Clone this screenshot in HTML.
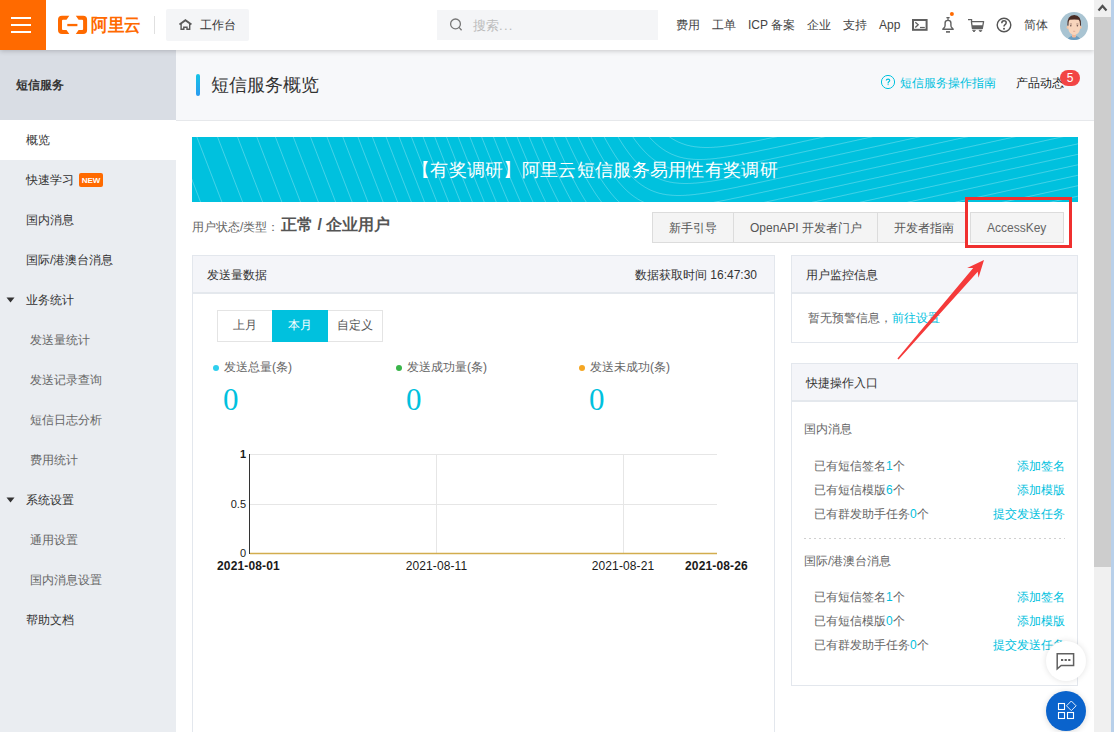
<!DOCTYPE html>
<html><head><meta charset="utf-8">
<style>
*{box-sizing:border-box;margin:0;padding:0}
html,body{width:1114px;height:732px;overflow:hidden;background:#fff;font-family:"Liberation Sans",sans-serif;color:#333;font-size:12px}
.a{position:absolute;white-space:nowrap;line-height:16px}
#top{position:absolute;left:0;top:0;width:1094px;height:50px;background:#fff;box-shadow:0 1px 5px rgba(0,0,0,.2);z-index:5}
#burger{position:absolute;left:0;top:0;width:46px;height:50px;background:#ff6a00}
#burger i{position:absolute;left:11px;width:20px;height:2px;background:#fff}
#side{position:absolute;left:0;top:50px;width:176px;height:682px;background:#eaedf1}
#sidehd{position:absolute;left:0;top:0;width:176px;height:70px;background:#d9dde4}
#main{position:absolute;left:176px;top:50px;width:918px;height:682px;background:#fff}
#mainhd{position:absolute;left:0;top:0;width:918px;height:71px;background:#f7f8fa;border-bottom:1px solid #e6e8eb}
.nav{position:absolute;top:17px;font-size:12px;color:#444;line-height:16px;white-space:nowrap}
.si{position:absolute;left:26px;font-size:12px;color:#333;line-height:16px;white-space:nowrap}
.ss{position:absolute;left:30px;font-size:12px;color:#666;line-height:16px;white-space:nowrap}
.panel{position:absolute;border:1px solid #e3e7ed;background:#fff}
.phd{position:absolute;left:0;top:0;right:0;height:38px;background:#f4f5f9;border-bottom:2px solid #e4e8ed}
#scroll{position:absolute;left:1094px;top:0;width:20px;height:732px;background:#f0f0f0;z-index:10}
</style></head><body>
<div id="top">
  <div id="burger"><i style="top:17px"></i><i style="top:24px"></i><i style="top:31px"></i></div>
  <!-- logo -->
  <svg class="a" style="left:54px;top:10px" width="40" height="30" viewBox="0 0 40 30">
    <path d="M15.3 5.8L8 5.8Q4 5.8 4 9.8L4 20Q4 24 8 24L15.3 24L12.5 20L9 20Q8 20 8 19L8 10.8Q8 9.8 9 9.8L12.5 9.8Z" fill="#ff6a00"/>
    <path d="M21.8 5.8L29.1 5.8Q33.1 5.8 33.1 9.8L33.1 20Q33.1 24 29.1 24L21.8 24L24.6 20L28.1 20Q29.1 20 29.1 19L29.1 10.8Q29.1 9.8 28.1 9.8L24.6 9.8Z" fill="#ff6a00"/>
    <rect x="13.3" y="13.9" width="10.1" height="2.3" fill="#ff6a00"/>
  </svg>
  <div class="a" style="left:91px;top:14px;font-size:18px;line-height:22px;color:#ff6a00;font-weight:bold;transform-origin:0 0;transform:scaleX(0.92)">阿里云</div>
  <div class="a" style="left:154px;top:16px;width:1px;height:18px;background:#e0e0e0"></div>
  <div class="a" style="left:166px;top:9px;width:83px;height:32px;background:#f4f5f7;border-radius:2px"></div>
  <svg class="a" style="left:179px;top:19px" width="14" height="12" viewBox="0 0 14 12">
    <path d="M0.5 5.6L6.4 1.2L12.4 5.6" fill="none" stroke="#5a5a5a" stroke-width="1.9" stroke-linejoin="miter"/>
    <path d="M2.1 5V10.3H4.8V8.3H8V10.3H10.7V5" fill="none" stroke="#5a5a5a" stroke-width="1.4"/>
  </svg>
  <div class="nav" style="left:200px;top:17px;color:#333">工作台</div>
  <div class="a" style="left:437px;top:10px;width:221px;height:30px;background:#f4f5f7"></div>
  <svg class="a" style="left:449px;top:17px" width="15" height="15" viewBox="0 0 15 15">
    <circle cx="6.5" cy="6.9" r="4.9" fill="none" stroke="#777" stroke-width="1.3"/><path d="M10 10.4L12.6 13.2" stroke="#777" stroke-width="1.3"/>
  </svg>
  <div class="nav" style="left:473px;top:18px;color:#bbb;font-size:13px">搜索<span style="letter-spacing:1.3px">...</span></div>
  <div class="nav" style="left:676px">费用</div>
  <div class="nav" style="left:712px">工单</div>
  <div class="nav" style="left:748px">ICP 备案</div>
  <div class="nav" style="left:807px">企业</div>
  <div class="nav" style="left:843px">支持</div>
  <div class="nav" style="left:879px">App</div>
  <svg class="a" style="left:912px;top:19px" width="16" height="12" viewBox="0 0 16 12">
    <rect x="1" y="1" width="13.6" height="9.8" fill="none" stroke="#606060" stroke-width="2"/>
    <path d="M3.3 3.2L6.2 5.8L3.3 8.5" fill="none" stroke="#606060" stroke-width="1.3"/><path d="M8 8.5H12.8" stroke="#606060" stroke-width="1.2"/>
  </svg>
  <svg class="a" style="left:941px;top:12px" width="16" height="22" viewBox="0 0 16 22">
    <circle cx="10.9" cy="2" r="2" fill="#ff6a00"/>
    <rect x="5.4" y="5" width="3.2" height="1.3" fill="#606060"/><rect x="6.4" y="5.5" width="1.2" height="3" fill="#606060"/>
    <path d="M1.8 17.2L3.6 15.1Q4.1 14.3 4.1 13V11Q4.1 8.4 7 8.4Q9.9 8.4 9.9 11V13Q9.9 14.3 10.4 15.1L12.2 17.2Z" fill="none" stroke="#606060" stroke-width="1.4" stroke-linejoin="round"/>
    <path d="M5 19.9H9" stroke="#606060" stroke-width="1.6"/>
  </svg>
  <svg class="a" style="left:968px;top:19px" width="17" height="14" viewBox="0 0 17 14">
    <path d="M0 0.6H3.6V2.6" fill="none" stroke="#606060" stroke-width="1.2"/>
    <path d="M3.4 2.6H15.6L14.3 9.5H4.4Z" fill="none" stroke="#606060" stroke-width="1.3" stroke-linejoin="round"/>
    <path d="M4 6.2H14.9L14.3 9.6H4.4Z" fill="#606060"/>
    <path d="M4.6 11.4H7.4L6 13Z M11.1 11.4H13.9L12.5 13Z" fill="#606060" stroke="#606060" stroke-width="0.8" stroke-linejoin="round"/>
  </svg>
  <svg class="a" style="left:996px;top:17px" width="16" height="16" viewBox="0 0 16 16">
    <circle cx="8" cy="8" r="6.8" fill="none" stroke="#555" stroke-width="1.4"/>
    <path d="M5.8 6.2Q5.8 3.8 8 3.8Q10.2 3.8 10.2 5.8Q10.2 7 8.8 7.8Q8 8.3 8 9.6" fill="none" stroke="#555" stroke-width="1.5"/>
    <circle cx="8" cy="11.8" r="1" fill="#555"/>
  </svg>
  <div class="nav" style="left:1024px">简体</div>
  <svg class="a" style="left:1060px;top:12px" width="28" height="28" viewBox="0 0 28 28">
    <defs><clipPath id="cav"><circle cx="14" cy="14" r="14"/></clipPath></defs>
    <circle cx="14" cy="14" r="14" fill="#a9c4d2"/>
    <g clip-path="url(#cav)">
      <path d="M7.5 28Q8.5 24 14 23.5Q19.5 24 20.5 28Z" fill="#6b9dc0"/>
      <path d="M12 21H16V25Q14 26 12 25Z" fill="#f0b89a"/>
      <ellipse cx="7.9" cy="15.2" rx="1.3" ry="1.7" fill="#f3c4a4"/>
      <ellipse cx="20.3" cy="15.2" rx="1.3" ry="1.7" fill="#f3c4a4"/>
      <path d="M8.4 9Q8.4 6 14.2 6Q20 6 20 9V16Q20 20 17 22Q15.5 23 14.2 23Q12.9 23 11.4 22Q8.4 20 8.4 16Z" fill="#f8d5bc"/>
      <path d="M7.4 13.5Q6.8 3 14.2 3Q21.6 3 21 13.5L20 13.8Q20 8.5 18.5 7.8Q14.2 7.2 9.8 7.8Q8.4 8.5 8.4 13.8Z" fill="#4a2c24"/>
      <circle cx="10.8" cy="13.8" r="0.8" fill="#6a5048"/><circle cx="17.4" cy="13.8" r="0.8" fill="#6a5048"/>
      <path d="M9.8 12H12M16.3 12H18.5" stroke="#7a5a50" stroke-width="0.6"/>
      <path d="M13.2 19.3H15.2" stroke="#d99a88" stroke-width="0.7"/>
    </g>
  </svg>
</div>
<div id="side">
  <div id="sidehd"></div>
  <div class="a" style="left:16px;top:27px;font-size:12px;font-weight:bold;color:#333">短信服务</div>
  <div class="a" style="left:0;top:70px;width:176px;height:40px;background:#fff"></div>
  <div class="si" style="top:82px">概览</div>
  <div class="si" style="top:122px">快速学习</div>
  <div class="a" style="left:79px;top:123px;width:24px;height:14px;background:#ff6a00;border-radius:2px;color:#fff;font-size:8px;line-height:15px;text-align:center;font-weight:bold">NEW</div>
  <div class="si" style="top:162px">国内消息</div>
  <div class="si" style="top:202px">国际/港澳台消息</div>
  <svg class="a" style="left:6px;top:247px" width="9" height="6" viewBox="0 0 9 6"><path d="M0.5 0.5H8.5L4.5 5.5Z" fill="#333"/></svg>
  <div class="si" style="top:242px">业务统计</div>
  <div class="ss" style="top:282px">发送量统计</div>
  <div class="ss" style="top:322px">发送记录查询</div>
  <div class="ss" style="top:362px">短信日志分析</div>
  <div class="ss" style="top:402px">费用统计</div>
  <svg class="a" style="left:6px;top:447px" width="9" height="6" viewBox="0 0 9 6"><path d="M0.5 0.5H8.5L4.5 5.5Z" fill="#333"/></svg>
  <div class="si" style="top:442px">系统设置</div>
  <div class="ss" style="top:482px">通用设置</div>
  <div class="ss" style="top:522px">国内消息设置</div>
  <div class="si" style="top:562px">帮助文档</div>
</div>
<div id="main">
  <div id="mainhd"></div>
  <div class="a" style="left:20px;top:24px;width:4px;height:22px;border-radius:2px;background:linear-gradient(#14c4e6,#2a9af0)"></div>
  <div class="a" style="left:35px;top:24px;font-size:18px;line-height:22px;color:#333">短信服务概览</div>
  <svg class="a" style="left:705px;top:25px" width="14" height="14" viewBox="0 0 14 14">
    <circle cx="7" cy="7" r="6.6" fill="none" stroke="#00c1de" stroke-width="1"/>
    <path d="M5.3 5.5Q5.3 4.2 7.1 4.2Q8.7 4.2 8.7 5.5Q8.7 6.3 7.8 6.8Q7.1 7.3 7.1 8.4" fill="none" stroke="#00c1de" stroke-width="1.2"/>
    <circle cx="7.1" cy="9.6" r="0.6" fill="#00c1de"/>
  </svg>
  <div class="a" style="left:724px;top:25px;font-size:12px;color:#00c1de">短信服务操作指南</div>
  <div class="a" style="left:840px;top:25px;font-size:12px;color:#222">产品动态</div>
  <div class="a" style="left:884px;top:20px;width:20px;height:16px;border-radius:8px;background:#f24545;color:#fff;font-size:12px;line-height:16px;text-align:center">5</div>
</div>

<!-- banner -->
<div class="a" style="left:192px;top:137px;width:886px;height:65px;background:#00c1de;overflow:hidden">
  <svg id="waves" width="886" height="65" viewBox="0 0 886 65" style="position:absolute;left:0;top:0"><path d="M488.0 -9.8 L489.0 -9.3 L490.0 -8.7 L491.0 -8.2 L492.0 -7.7 L493.0 -7.2 L494.0 -6.7 L495.0 -6.3 L496.0 -5.9 L497.0 -5.5 L498.0 -5.1 L499.0 -4.8 L500.0 -4.5 L501.0 -4.2 L502.0 -3.9 L503.0 -3.6 L504.0 -3.4 L505.0 -3.1 L506.0 -2.9 L507.0 -2.7 L508.0 -2.6 L509.0 -2.4 L510.0 -2.3 L511.0 -2.1 L512.0 -2.0 L513.0 -1.9 L514.0 -1.8 L515.0 -1.7 L516.0 -1.7 L517.0 -1.6 L518.0 -1.6 L519.0 -1.6 L520.0 -1.5 L521.0 -1.5 L522.0 -1.5 L523.0 -1.5 L524.0 -1.6 L525.0 -1.6 L526.0 -1.6 L527.0 -1.7 L528.0 -1.7 L529.0 -1.8 L530.0 -1.8 L531.0 -1.9 L532.0 -2.0 L533.0 -2.1 L534.0 -2.2 L535.0 -2.3 L536.0 -2.4 L537.0 -2.5 L538.0 -2.6 L539.0 -2.7 L540.0 -2.8 L541.0 -2.9 L542.0 -3.1 L543.0 -3.2 L544.0 -3.3 L545.0 -3.5 L546.0 -3.6 L547.0 -3.8 L548.0 -3.9 L549.0 -4.1 L550.0 -4.2 L551.0 -4.4 L552.0 -4.6 L553.0 -4.7 L554.0 -4.9 L555.0 -5.1 L556.0 -5.2 L557.0 -5.4 L558.0 -5.6 L559.0 -5.8 L560.0 -5.9 L561.0 -6.1 L562.0 -6.3 L563.0 -6.5 L564.0 -6.7 L565.0 -6.9 L566.0 -7.1 L567.0 -7.3 L568.0 -7.4 L569.0 -7.6 L570.0 -7.8 L571.0 -8.0 L572.0 -8.2 L573.0 -8.4 L574.0 -8.6 L575.0 -8.8 L576.0 -9.0 L577.0 -9.2 L578.0 -9.4 L579.0 -9.6 L580.0 -9.8 L580.5 -9.9 M466.5 -9.6 L467.5 -8.6 L468.5 -7.6 L469.5 -6.6 L470.5 -5.7 L471.5 -4.8 L472.5 -4.0 L473.5 -3.1 L474.5 -2.3 L475.5 -1.6 L476.5 -0.8 L477.5 -0.1 L478.5 0.6 L479.5 1.2 L480.5 1.9 L481.5 2.5 L482.5 3.0 L483.5 3.6 L484.5 4.1 L485.5 4.6 L486.5 5.1 L487.5 5.5 L488.5 5.9 L489.5 6.3 L490.5 6.7 L491.5 7.0 L492.5 7.4 L493.5 7.7 L494.5 8.0 L495.5 8.3 L496.5 8.5 L497.5 8.7 L498.5 9.0 L499.5 9.2 L500.5 9.3 L501.5 9.5 L502.5 9.7 L503.5 9.8 L504.5 9.9 L505.5 10.0 L506.5 10.1 L507.5 10.2 L508.5 10.3 L509.5 10.3 L510.5 10.4 L511.5 10.4 L512.5 10.5 L513.5 10.5 L514.5 10.5 L515.5 10.5 L516.5 10.5 L517.5 10.4 L518.5 10.4 L519.5 10.4 L520.5 10.3 L521.5 10.3 L522.5 10.2 L523.5 10.1 L524.5 10.1 L525.5 10.0 L526.5 9.9 L527.5 9.8 L528.5 9.7 L529.5 9.6 L530.5 9.5 L531.5 9.4 L532.5 9.2 L533.5 9.1 L534.5 9.0 L535.5 8.9 L536.5 8.7 L537.5 8.6 L538.5 8.4 L539.5 8.3 L540.5 8.2 L541.5 8.0 L542.5 7.8 L543.5 7.7 L544.5 7.5 L545.5 7.4 L546.5 7.2 L547.5 7.0 L548.5 6.9 L549.5 6.7 L550.5 6.5 L551.5 6.3 L552.5 6.1 L553.5 6.0 L554.5 5.8 L555.5 5.6 L556.5 5.4 L557.5 5.2 L558.5 5.0 L559.5 4.8 L560.5 4.6 L561.5 4.5 L562.5 4.3 L563.5 4.1 L564.5 3.9 L565.5 3.7 L566.5 3.5 L567.5 3.3 L568.5 3.1 L569.5 2.9 L570.5 2.7 L571.5 2.5 L572.5 2.3 L573.5 2.1 L574.5 1.8 L575.5 1.6 L576.5 1.4 L577.5 1.2 L578.5 1.0 L579.5 0.8 L580.5 0.6 L581.5 0.4 L582.5 0.2 L583.5 -0.0 L584.5 -0.2 L585.5 -0.5 L586.5 -0.7 L587.5 -0.9 L588.5 -1.1 L589.5 -1.3 L590.5 -1.5 L591.5 -1.7 L592.5 -1.9 L593.5 -2.2 L594.5 -2.4 L595.5 -2.6 L596.5 -2.8 L597.5 -3.0 L598.5 -3.2 L599.5 -3.4 L600.5 -3.7 L601.5 -3.9 L602.5 -4.1 L603.5 -4.3 L604.5 -4.5 L605.5 -4.7 L606.5 -5.0 L607.5 -5.2 L608.5 -5.4 L609.5 -5.6 L610.5 -5.8 L611.5 -6.0 L612.5 -6.3 L613.5 -6.5 L614.5 -6.7 L615.5 -6.9 L616.5 -7.1 L617.5 -7.4 L618.5 -7.6 L619.5 -7.8 L620.5 -8.0 L621.5 -8.2 L622.5 -8.4 L623.5 -8.7 L624.5 -8.9 L625.5 -9.1 L626.5 -9.3 L627.5 -9.5 L628.5 -9.8 L629.5 -10.0 L629.5 -10.0 M449.5 -9.7 L450.5 -8.3 L451.5 -7.0 L452.5 -5.7 L453.5 -4.5 L454.5 -3.2 L455.5 -2.0 L456.5 -0.9 L457.5 0.2 L458.5 1.3 L459.5 2.4 L460.5 3.4 L461.5 4.4 L462.5 5.4 L463.5 6.3 L464.5 7.2 L465.5 8.0 L466.5 8.9 L467.5 9.7 L468.5 10.4 L469.5 11.2 L470.5 11.9 L471.5 12.6 L472.5 13.2 L473.5 13.9 L474.5 14.5 L475.5 15.0 L476.5 15.6 L477.5 16.1 L478.5 16.6 L479.5 17.1 L480.5 17.5 L481.5 17.9 L482.5 18.3 L483.5 18.7 L484.5 19.0 L485.5 19.4 L486.5 19.7 L487.5 20.0 L488.5 20.3 L489.5 20.5 L490.5 20.7 L491.5 21.0 L492.5 21.2 L493.5 21.3 L494.5 21.5 L495.5 21.7 L496.5 21.8 L497.5 21.9 L498.5 22.0 L499.5 22.1 L500.5 22.2 L501.5 22.3 L502.5 22.3 L503.5 22.4 L504.5 22.4 L505.5 22.5 L506.5 22.5 L507.5 22.5 L508.5 22.5 L509.5 22.5 L510.5 22.4 L511.5 22.4 L512.5 22.4 L513.5 22.3 L514.5 22.3 L515.5 22.2 L516.5 22.1 L517.5 22.1 L518.5 22.0 L519.5 21.9 L520.5 21.8 L521.5 21.7 L522.5 21.6 L523.5 21.5 L524.5 21.4 L525.5 21.2 L526.5 21.1 L527.5 21.0 L528.5 20.9 L529.5 20.7 L530.5 20.6 L531.5 20.4 L532.5 20.3 L533.5 20.2 L534.5 20.0 L535.5 19.8 L536.5 19.7 L537.5 19.5 L538.5 19.4 L539.5 19.2 L540.5 19.0 L541.5 18.9 L542.5 18.7 L543.5 18.5 L544.5 18.3 L545.5 18.1 L546.5 18.0 L547.5 17.8 L548.5 17.6 L549.5 17.4 L550.5 17.2 L551.5 17.0 L552.5 16.8 L553.5 16.6 L554.5 16.5 L555.5 16.3 L556.5 16.1 L557.5 15.9 L558.5 15.7 L559.5 15.5 L560.5 15.3 L561.5 15.1 L562.5 14.9 L563.5 14.7 L564.5 14.5 L565.5 14.3 L566.5 14.1 L567.5 13.8 L568.5 13.6 L569.5 13.4 L570.5 13.2 L571.5 13.0 L572.5 12.8 L573.5 12.6 L574.5 12.4 L575.5 12.2 L576.5 12.0 L577.5 11.8 L578.5 11.5 L579.5 11.3 L580.5 11.1 L581.5 10.9 L582.5 10.7 L583.5 10.5 L584.5 10.3 L585.5 10.1 L586.5 9.8 L587.5 9.6 L588.5 9.4 L589.5 9.2 L590.5 9.0 L591.5 8.8 L592.5 8.6 L593.5 8.3 L594.5 8.1 L595.5 7.9 L596.5 7.7 L597.5 7.5 L598.5 7.3 L599.5 7.0 L600.5 6.8 L601.5 6.6 L602.5 6.4 L603.5 6.2 L604.5 6.0 L605.5 5.7 L606.5 5.5 L607.5 5.3 L608.5 5.1 L609.5 4.9 L610.5 4.6 L611.5 4.4 L612.5 4.2 L613.5 4.0 L614.5 3.8 L615.5 3.6 L616.5 3.3 L617.5 3.1 L618.5 2.9 L619.5 2.7 L620.5 2.5 L621.5 2.2 L622.5 2.0 L623.5 1.8 L624.5 1.6 L625.5 1.4 L626.5 1.2 L627.5 0.9 L628.5 0.7 L629.5 0.5 L630.5 0.3 L631.5 0.1 L632.5 -0.2 L633.5 -0.4 L634.5 -0.6 L635.5 -0.8 L636.5 -1.0 L637.5 -1.3 L638.5 -1.5 L639.5 -1.7 L640.5 -1.9 L641.5 -2.1 L642.5 -2.4 L643.5 -2.6 L644.5 -2.8 L645.5 -3.0 L646.5 -3.2 L647.5 -3.5 L648.5 -3.7 L649.5 -3.9 L650.5 -4.1 L651.5 -4.3 L652.5 -4.6 L653.5 -4.8 L654.5 -5.0 L655.5 -5.2 L656.5 -5.4 L657.5 -5.7 L658.5 -5.9 L659.5 -6.1 L660.5 -6.3 L661.5 -6.5 L662.5 -6.8 L663.5 -7.0 L664.5 -7.2 L665.5 -7.4 L666.5 -7.6 L667.5 -7.9 L668.5 -8.1 L669.5 -8.3 L670.5 -8.5 L671.5 -8.7 L672.5 -9.0 L673.5 -9.2 L674.5 -9.4 L675.5 -9.6 L676.5 -9.8 L677.0 -9.9 M434.5 -9.7 L435.5 -8.1 L436.5 -6.5 L437.5 -4.9 L438.5 -3.4 L439.5 -1.9 L440.5 -0.5 L441.5 0.9 L442.5 2.3 L443.5 3.7 L444.5 5.0 L445.5 6.3 L446.5 7.5 L447.5 8.8 L448.5 10.0 L449.5 11.1 L450.5 12.2 L451.5 13.3 L452.5 14.4 L453.5 15.4 L454.5 16.4 L455.5 17.4 L456.5 18.3 L457.5 19.2 L458.5 20.0 L459.5 20.9 L460.5 21.7 L461.5 22.4 L462.5 23.2 L463.5 23.9 L464.5 24.6 L465.5 25.2 L466.5 25.9 L467.5 26.5 L468.5 27.0 L469.5 27.6 L470.5 28.1 L471.5 28.6 L472.5 29.1 L473.5 29.5 L474.5 29.9 L475.5 30.3 L476.5 30.7 L477.5 31.0 L478.5 31.4 L479.5 31.7 L480.5 32.0 L481.5 32.3 L482.5 32.5 L483.5 32.7 L484.5 33.0 L485.5 33.2 L486.5 33.3 L487.5 33.5 L488.5 33.7 L489.5 33.8 L490.5 33.9 L491.5 34.0 L492.5 34.1 L493.5 34.2 L494.5 34.3 L495.5 34.3 L496.5 34.4 L497.5 34.4 L498.5 34.5 L499.5 34.5 L500.5 34.5 L501.5 34.5 L502.5 34.5 L503.5 34.4 L504.5 34.4 L505.5 34.4 L506.5 34.3 L507.5 34.3 L508.5 34.2 L509.5 34.1 L510.5 34.1 L511.5 34.0 L512.5 33.9 L513.5 33.8 L514.5 33.7 L515.5 33.6 L516.5 33.5 L517.5 33.4 L518.5 33.2 L519.5 33.1 L520.5 33.0 L521.5 32.9 L522.5 32.7 L523.5 32.6 L524.5 32.4 L525.5 32.3 L526.5 32.2 L527.5 32.0 L528.5 31.8 L529.5 31.7 L530.5 31.5 L531.5 31.4 L532.5 31.2 L533.5 31.0 L534.5 30.9 L535.5 30.7 L536.5 30.5 L537.5 30.3 L538.5 30.1 L539.5 30.0 L540.5 29.8 L541.5 29.6 L542.5 29.4 L543.5 29.2 L544.5 29.0 L545.5 28.8 L546.5 28.6 L547.5 28.5 L548.5 28.3 L549.5 28.1 L550.5 27.9 L551.5 27.7 L552.5 27.5 L553.5 27.3 L554.5 27.1 L555.5 26.9 L556.5 26.7 L557.5 26.5 L558.5 26.3 L559.5 26.1 L560.5 25.8 L561.5 25.6 L562.5 25.4 L563.5 25.2 L564.5 25.0 L565.5 24.8 L566.5 24.6 L567.5 24.4 L568.5 24.2 L569.5 24.0 L570.5 23.8 L571.5 23.5 L572.5 23.3 L573.5 23.1 L574.5 22.9 L575.5 22.7 L576.5 22.5 L577.5 22.3 L578.5 22.1 L579.5 21.8 L580.5 21.6 L581.5 21.4 L582.5 21.2 L583.5 21.0 L584.5 20.8 L585.5 20.6 L586.5 20.3 L587.5 20.1 L588.5 19.9 L589.5 19.7 L590.5 19.5 L591.5 19.3 L592.5 19.0 L593.5 18.8 L594.5 18.6 L595.5 18.4 L596.5 18.2 L597.5 18.0 L598.5 17.7 L599.5 17.5 L600.5 17.3 L601.5 17.1 L602.5 16.9 L603.5 16.6 L604.5 16.4 L605.5 16.2 L606.5 16.0 L607.5 15.8 L608.5 15.6 L609.5 15.3 L610.5 15.1 L611.5 14.9 L612.5 14.7 L613.5 14.5 L614.5 14.2 L615.5 14.0 L616.5 13.8 L617.5 13.6 L618.5 13.4 L619.5 13.2 L620.5 12.9 L621.5 12.7 L622.5 12.5 L623.5 12.3 L624.5 12.1 L625.5 11.8 L626.5 11.6 L627.5 11.4 L628.5 11.2 L629.5 11.0 L630.5 10.7 L631.5 10.5 L632.5 10.3 L633.5 10.1 L634.5 9.9 L635.5 9.6 L636.5 9.4 L637.5 9.2 L638.5 9.0 L639.5 8.8 L640.5 8.5 L641.5 8.3 L642.5 8.1 L643.5 7.9 L644.5 7.7 L645.5 7.4 L646.5 7.2 L647.5 7.0 L648.5 6.8 L649.5 6.6 L650.5 6.3 L651.5 6.1 L652.5 5.9 L653.5 5.7 L654.5 5.5 L655.5 5.2 L656.5 5.0 L657.5 4.8 L658.5 4.6 L659.5 4.4 L660.5 4.1 L661.5 3.9 L662.5 3.7 L663.5 3.5 L664.5 3.3 L665.5 3.0 L666.5 2.8 L667.5 2.6 L668.5 2.4 L669.5 2.2 L670.5 1.9 L671.5 1.7 L672.5 1.5 L673.5 1.3 L674.5 1.1 L675.5 0.8 L676.5 0.6 L677.5 0.4 L678.5 0.2 L679.5 -0.0 L680.5 -0.3 L681.5 -0.5 L682.5 -0.7 L683.5 -0.9 L684.5 -1.1 L685.5 -1.4 L686.5 -1.6 L687.5 -1.8 L688.5 -2.0 L689.5 -2.2 L690.5 -2.5 L691.5 -2.7 L692.5 -2.9 L693.5 -3.1 L694.5 -3.3 L695.5 -3.6 L696.5 -3.8 L697.5 -4.0 L698.5 -4.2 L699.5 -4.4 L700.5 -4.7 L701.5 -4.9 L702.5 -5.1 L703.5 -5.3 L704.5 -5.5 L705.5 -5.8 L706.5 -6.0 L707.5 -6.2 L708.5 -6.4 L709.5 -6.6 L710.5 -6.9 L711.5 -7.1 L712.5 -7.3 L713.5 -7.5 L714.5 -7.7 L715.5 -8.0 L716.5 -8.2 L717.5 -8.4 L718.5 -8.6 L719.5 -8.8 L720.5 -9.1 L721.5 -9.3 L722.5 -9.5 L723.5 -9.7 L724.5 -9.9 L724.5 -9.9 M420.5 -9.7 L421.5 -7.9 L422.5 -6.1 L423.5 -4.4 L424.5 -2.7 L425.5 -1.0 L426.5 0.7 L427.5 2.3 L428.5 3.9 L429.5 5.5 L430.5 7.1 L431.5 8.6 L432.5 10.1 L433.5 11.5 L434.5 12.9 L435.5 14.3 L436.5 15.7 L437.5 17.0 L438.5 18.3 L439.5 19.5 L440.5 20.8 L441.5 22.0 L442.5 23.1 L443.5 24.2 L444.5 25.3 L445.5 26.4 L446.5 27.4 L447.5 28.4 L448.5 29.4 L449.5 30.3 L450.5 31.2 L451.5 32.0 L452.5 32.9 L453.5 33.7 L454.5 34.4 L455.5 35.2 L456.5 35.9 L457.5 36.6 L458.5 37.2 L459.5 37.9 L460.5 38.5 L461.5 39.0 L462.5 39.6 L463.5 40.1 L464.5 40.6 L465.5 41.1 L466.5 41.5 L467.5 41.9 L468.5 42.3 L469.5 42.7 L470.5 43.0 L471.5 43.4 L472.5 43.7 L473.5 44.0 L474.5 44.3 L475.5 44.5 L476.5 44.7 L477.5 45.0 L478.5 45.2 L479.5 45.3 L480.5 45.5 L481.5 45.7 L482.5 45.8 L483.5 45.9 L484.5 46.0 L485.5 46.1 L486.5 46.2 L487.5 46.3 L488.5 46.3 L489.5 46.4 L490.5 46.4 L491.5 46.5 L492.5 46.5 L493.5 46.5 L494.5 46.5 L495.5 46.5 L496.5 46.4 L497.5 46.4 L498.5 46.4 L499.5 46.3 L500.5 46.3 L501.5 46.2 L502.5 46.1 L503.5 46.1 L504.5 46.0 L505.5 45.9 L506.5 45.8 L507.5 45.7 L508.5 45.6 L509.5 45.5 L510.5 45.4 L511.5 45.2 L512.5 45.1 L513.5 45.0 L514.5 44.9 L515.5 44.7 L516.5 44.6 L517.5 44.4 L518.5 44.3 L519.5 44.2 L520.5 44.0 L521.5 43.8 L522.5 43.7 L523.5 43.5 L524.5 43.4 L525.5 43.2 L526.5 43.0 L527.5 42.9 L528.5 42.7 L529.5 42.5 L530.5 42.3 L531.5 42.1 L532.5 42.0 L533.5 41.8 L534.5 41.6 L535.5 41.4 L536.5 41.2 L537.5 41.0 L538.5 40.8 L539.5 40.6 L540.5 40.5 L541.5 40.3 L542.5 40.1 L543.5 39.9 L544.5 39.7 L545.5 39.5 L546.5 39.3 L547.5 39.1 L548.5 38.9 L549.5 38.7 L550.5 38.5 L551.5 38.3 L552.5 38.1 L553.5 37.8 L554.5 37.6 L555.5 37.4 L556.5 37.2 L557.5 37.0 L558.5 36.8 L559.5 36.6 L560.5 36.4 L561.5 36.2 L562.5 36.0 L563.5 35.8 L564.5 35.5 L565.5 35.3 L566.5 35.1 L567.5 34.9 L568.5 34.7 L569.5 34.5 L570.5 34.3 L571.5 34.1 L572.5 33.8 L573.5 33.6 L574.5 33.4 L575.5 33.2 L576.5 33.0 L577.5 32.8 L578.5 32.6 L579.5 32.3 L580.5 32.1 L581.5 31.9 L582.5 31.7 L583.5 31.5 L584.5 31.3 L585.5 31.0 L586.5 30.8 L587.5 30.6 L588.5 30.4 L589.5 30.2 L590.5 30.0 L591.5 29.7 L592.5 29.5 L593.5 29.3 L594.5 29.1 L595.5 28.9 L596.5 28.6 L597.5 28.4 L598.5 28.2 L599.5 28.0 L600.5 27.8 L601.5 27.6 L602.5 27.3 L603.5 27.1 L604.5 26.9 L605.5 26.7 L606.5 26.5 L607.5 26.2 L608.5 26.0 L609.5 25.8 L610.5 25.6 L611.5 25.4 L612.5 25.2 L613.5 24.9 L614.5 24.7 L615.5 24.5 L616.5 24.3 L617.5 24.1 L618.5 23.8 L619.5 23.6 L620.5 23.4 L621.5 23.2 L622.5 23.0 L623.5 22.7 L624.5 22.5 L625.5 22.3 L626.5 22.1 L627.5 21.9 L628.5 21.6 L629.5 21.4 L630.5 21.2 L631.5 21.0 L632.5 20.8 L633.5 20.5 L634.5 20.3 L635.5 20.1 L636.5 19.9 L637.5 19.7 L638.5 19.4 L639.5 19.2 L640.5 19.0 L641.5 18.8 L642.5 18.6 L643.5 18.3 L644.5 18.1 L645.5 17.9 L646.5 17.7 L647.5 17.5 L648.5 17.2 L649.5 17.0 L650.5 16.8 L651.5 16.6 L652.5 16.4 L653.5 16.1 L654.5 15.9 L655.5 15.7 L656.5 15.5 L657.5 15.3 L658.5 15.0 L659.5 14.8 L660.5 14.6 L661.5 14.4 L662.5 14.2 L663.5 13.9 L664.5 13.7 L665.5 13.5 L666.5 13.3 L667.5 13.1 L668.5 12.8 L669.5 12.6 L670.5 12.4 L671.5 12.2 L672.5 12.0 L673.5 11.7 L674.5 11.5 L675.5 11.3 L676.5 11.1 L677.5 10.9 L678.5 10.6 L679.5 10.4 L680.5 10.2 L681.5 10.0 L682.5 9.8 L683.5 9.5 L684.5 9.3 L685.5 9.1 L686.5 8.9 L687.5 8.7 L688.5 8.4 L689.5 8.2 L690.5 8.0 L691.5 7.8 L692.5 7.6 L693.5 7.3 L694.5 7.1 L695.5 6.9 L696.5 6.7 L697.5 6.5 L698.5 6.2 L699.5 6.0 L700.5 5.8 L701.5 5.6 L702.5 5.4 L703.5 5.1 L704.5 4.9 L705.5 4.7 L706.5 4.5 L707.5 4.3 L708.5 4.0 L709.5 3.8 L710.5 3.6 L711.5 3.4 L712.5 3.2 L713.5 2.9 L714.5 2.7 L715.5 2.5 L716.5 2.3 L717.5 2.1 L718.5 1.8 L719.5 1.6 L720.5 1.4 L721.5 1.2 L722.5 1.0 L723.5 0.7 L724.5 0.5 L725.5 0.3 L726.5 0.1 L727.5 -0.1 L728.5 -0.4 L729.5 -0.6 L730.5 -0.8 L731.5 -1.0 L732.5 -1.2 L733.5 -1.5 L734.5 -1.7 L735.5 -1.9 L736.5 -2.1 L737.5 -2.3 L738.5 -2.6 L739.5 -2.8 L740.5 -3.0 L741.5 -3.2 L742.5 -3.4 L743.5 -3.7 L744.5 -3.9 L745.5 -4.1 L746.5 -4.3 L747.5 -4.5 L748.5 -4.8 L749.5 -5.0 L750.5 -5.2 L751.5 -5.4 L752.5 -5.6 L753.5 -5.9 L754.5 -6.1 L755.5 -6.3 L756.5 -6.5 L757.5 -6.7 L758.5 -7.0 L759.5 -7.2 L760.5 -7.4 L761.5 -7.6 L762.5 -7.8 L763.5 -8.1 L764.5 -8.3 L765.5 -8.5 L766.5 -8.7 L767.5 -8.9 L768.5 -9.2 L769.5 -9.4 L770.5 -9.6 L771.5 -9.8 L772.0 -9.9 M407.5 -9.1 L408.5 -7.1 L409.5 -5.2 L410.5 -3.3 L411.5 -1.4 L412.5 0.4 L413.5 2.3 L414.5 4.1 L415.5 5.9 L416.5 7.6 L417.5 9.3 L418.5 11.0 L419.5 12.7 L420.5 14.3 L421.5 15.9 L422.5 17.5 L423.5 19.1 L424.5 20.6 L425.5 22.1 L426.5 23.5 L427.5 24.9 L428.5 26.3 L429.5 27.7 L430.5 29.0 L431.5 30.3 L432.5 31.5 L433.5 32.8 L434.5 34.0 L435.5 35.1 L436.5 36.2 L437.5 37.3 L438.5 38.4 L439.5 39.4 L440.5 40.4 L441.5 41.4 L442.5 42.3 L443.5 43.2 L444.5 44.0 L445.5 44.9 L446.5 45.7 L447.5 46.4 L448.5 47.2 L449.5 47.9 L450.5 48.6 L451.5 49.2 L452.5 49.9 L453.5 50.5 L454.5 51.0 L455.5 51.6 L456.5 52.1 L457.5 52.6 L458.5 53.1 L459.5 53.5 L460.5 53.9 L461.5 54.3 L462.5 54.7 L463.5 55.0 L464.5 55.4 L465.5 55.7 L466.5 56.0 L467.5 56.3 L468.5 56.5 L469.5 56.7 L470.5 57.0 L471.5 57.2 L472.5 57.3 L473.5 57.5 L474.5 57.7 L475.5 57.8 L476.5 57.9 L477.5 58.0 L478.5 58.1 L479.5 58.2 L480.5 58.3 L481.5 58.3 L482.5 58.4 L483.5 58.4 L484.5 58.5 L485.5 58.5 L486.5 58.5 L487.5 58.5 L488.5 58.5 L489.5 58.4 L490.5 58.4 L491.5 58.4 L492.5 58.3 L493.5 58.3 L494.5 58.2 L495.5 58.1 L496.5 58.1 L497.5 58.0 L498.5 57.9 L499.5 57.8 L500.5 57.7 L501.5 57.6 L502.5 57.5 L503.5 57.4 L504.5 57.2 L505.5 57.1 L506.5 57.0 L507.5 56.9 L508.5 56.7 L509.5 56.6 L510.5 56.4 L511.5 56.3 L512.5 56.2 L513.5 56.0 L514.5 55.8 L515.5 55.7 L516.5 55.5 L517.5 55.4 L518.5 55.2 L519.5 55.0 L520.5 54.9 L521.5 54.7 L522.5 54.5 L523.5 54.3 L524.5 54.1 L525.5 54.0 L526.5 53.8 L527.5 53.6 L528.5 53.4 L529.5 53.2 L530.5 53.0 L531.5 52.8 L532.5 52.6 L533.5 52.5 L534.5 52.3 L535.5 52.1 L536.5 51.9 L537.5 51.7 L538.5 51.5 L539.5 51.3 L540.5 51.1 L541.5 50.9 L542.5 50.7 L543.5 50.5 L544.5 50.3 L545.5 50.1 L546.5 49.8 L547.5 49.6 L548.5 49.4 L549.5 49.2 L550.5 49.0 L551.5 48.8 L552.5 48.6 L553.5 48.4 L554.5 48.2 L555.5 48.0 L556.5 47.8 L557.5 47.5 L558.5 47.3 L559.5 47.1 L560.5 46.9 L561.5 46.7 L562.5 46.5 L563.5 46.3 L564.5 46.1 L565.5 45.8 L566.5 45.6 L567.5 45.4 L568.5 45.2 L569.5 45.0 L570.5 44.8 L571.5 44.6 L572.5 44.3 L573.5 44.1 L574.5 43.9 L575.5 43.7 L576.5 43.5 L577.5 43.3 L578.5 43.0 L579.5 42.8 L580.5 42.6 L581.5 42.4 L582.5 42.2 L583.5 42.0 L584.5 41.7 L585.5 41.5 L586.5 41.3 L587.5 41.1 L588.5 40.9 L589.5 40.6 L590.5 40.4 L591.5 40.2 L592.5 40.0 L593.5 39.8 L594.5 39.6 L595.5 39.3 L596.5 39.1 L597.5 38.9 L598.5 38.7 L599.5 38.5 L600.5 38.2 L601.5 38.0 L602.5 37.8 L603.5 37.6 L604.5 37.4 L605.5 37.2 L606.5 36.9 L607.5 36.7 L608.5 36.5 L609.5 36.3 L610.5 36.1 L611.5 35.8 L612.5 35.6 L613.5 35.4 L614.5 35.2 L615.5 35.0 L616.5 34.7 L617.5 34.5 L618.5 34.3 L619.5 34.1 L620.5 33.9 L621.5 33.6 L622.5 33.4 L623.5 33.2 L624.5 33.0 L625.5 32.8 L626.5 32.5 L627.5 32.3 L628.5 32.1 L629.5 31.9 L630.5 31.7 L631.5 31.4 L632.5 31.2 L633.5 31.0 L634.5 30.8 L635.5 30.6 L636.5 30.3 L637.5 30.1 L638.5 29.9 L639.5 29.7 L640.5 29.5 L641.5 29.2 L642.5 29.0 L643.5 28.8 L644.5 28.6 L645.5 28.4 L646.5 28.1 L647.5 27.9 L648.5 27.7 L649.5 27.5 L650.5 27.3 L651.5 27.0 L652.5 26.8 L653.5 26.6 L654.5 26.4 L655.5 26.2 L656.5 25.9 L657.5 25.7 L658.5 25.5 L659.5 25.3 L660.5 25.1 L661.5 24.8 L662.5 24.6 L663.5 24.4 L664.5 24.2 L665.5 24.0 L666.5 23.7 L667.5 23.5 L668.5 23.3 L669.5 23.1 L670.5 22.9 L671.5 22.6 L672.5 22.4 L673.5 22.2 L674.5 22.0 L675.5 21.8 L676.5 21.5 L677.5 21.3 L678.5 21.1 L679.5 20.9 L680.5 20.7 L681.5 20.4 L682.5 20.2 L683.5 20.0 L684.5 19.8 L685.5 19.6 L686.5 19.3 L687.5 19.1 L688.5 18.9 L689.5 18.7 L690.5 18.5 L691.5 18.2 L692.5 18.0 L693.5 17.8 L694.5 17.6 L695.5 17.4 L696.5 17.1 L697.5 16.9 L698.5 16.7 L699.5 16.5 L700.5 16.3 L701.5 16.0 L702.5 15.8 L703.5 15.6 L704.5 15.4 L705.5 15.2 L706.5 14.9 L707.5 14.7 L708.5 14.5 L709.5 14.3 L710.5 14.1 L711.5 13.8 L712.5 13.6 L713.5 13.4 L714.5 13.2 L715.5 13.0 L716.5 12.7 L717.5 12.5 L718.5 12.3 L719.5 12.1 L720.5 11.9 L721.5 11.6 L722.5 11.4 L723.5 11.2 L724.5 11.0 L725.5 10.8 L726.5 10.5 L727.5 10.3 L728.5 10.1 L729.5 9.9 L730.5 9.7 L731.5 9.4 L732.5 9.2 L733.5 9.0 L734.5 8.8 L735.5 8.6 L736.5 8.3 L737.5 8.1 L738.5 7.9 L739.5 7.7 L740.5 7.5 L741.5 7.2 L742.5 7.0 L743.5 6.8 L744.5 6.6 L745.5 6.4 L746.5 6.1 L747.5 5.9 L748.5 5.7 L749.5 5.5 L750.5 5.3 L751.5 5.0 L752.5 4.8 L753.5 4.6 L754.5 4.4 L755.5 4.2 L756.5 3.9 L757.5 3.7 L758.5 3.5 L759.5 3.3 L760.5 3.1 L761.5 2.8 L762.5 2.6 L763.5 2.4 L764.5 2.2 L765.5 2.0 L766.5 1.7 L767.5 1.5 L768.5 1.3 L769.5 1.1 L770.5 0.9 L771.5 0.6 L772.5 0.4 L773.5 0.2 L774.5 -0.0 L775.5 -0.2 L776.5 -0.5 L777.5 -0.7 L778.5 -0.9 L779.5 -1.1 L780.5 -1.3 L781.5 -1.6 L782.5 -1.8 L783.5 -2.0 L784.5 -2.2 L785.5 -2.4 L786.5 -2.7 L787.5 -2.9 L788.5 -3.1 L789.5 -3.3 L790.5 -3.5 L791.5 -3.8 L792.5 -4.0 L793.5 -4.2 L794.5 -4.4 L795.5 -4.6 L796.5 -4.9 L797.5 -5.1 L798.5 -5.3 L799.5 -5.5 L800.5 -5.7 L801.5 -6.0 L802.5 -6.2 L803.5 -6.4 L804.5 -6.6 L805.5 -6.8 L806.5 -7.1 L807.5 -7.3 L808.5 -7.5 L809.5 -7.7 L810.5 -7.9 L811.5 -8.2 L812.5 -8.4 L813.5 -8.6 L814.5 -8.8 L815.5 -9.0 L816.5 -9.3 L817.5 -9.5 L818.5 -9.7 L819.5 -9.9 L819.5 -9.9 M394.5 -9.3 L395.5 -7.2 L396.5 -5.2 L397.5 -3.1 L398.5 -1.1 L399.5 0.9 L400.5 2.9 L401.5 4.9 L402.5 6.8 L403.5 8.7 L404.5 10.6 L405.5 12.4 L406.5 14.3 L407.5 16.1 L408.5 17.9 L409.5 19.6 L410.5 21.3 L411.5 23.0 L412.5 24.7 L413.5 26.3 L414.5 27.9 L415.5 29.5 L416.5 31.1 L417.5 32.6 L418.5 34.1 L419.5 35.5 L420.5 36.9 L421.5 38.3 L422.5 39.7 L423.5 41.0 L424.5 42.3 L425.5 43.5 L426.5 44.8 L427.5 46.0 L428.5 47.1 L429.5 48.2 L430.5 49.3 L431.5 50.4 L432.5 51.4 L433.5 52.4 L434.5 53.4 L435.5 54.3 L436.5 55.2 L437.5 56.0 L438.5 56.9 L439.5 57.7 L440.5 58.4 L441.5 59.2 L442.5 59.9 L443.5 60.6 L444.5 61.2 L445.5 61.9 L446.5 62.5 L447.5 63.0 L448.5 63.6 L449.5 64.1 L450.5 64.6 L451.5 65.1 L452.5 65.5 L453.5 65.9 L454.5 66.3 L455.5 66.7 L456.5 67.0 L457.5 67.4 L458.5 67.7 L459.5 68.0 L460.5 68.3 L461.5 68.5 L462.5 68.7 L463.5 69.0 L464.5 69.2 L465.5 69.3 L466.5 69.5 L467.5 69.7 L468.5 69.8 L469.5 69.9 L470.5 70.0 L471.5 70.1 L472.5 70.2 L473.5 70.3 L474.5 70.3 L475.5 70.4 L476.5 70.4 L477.5 70.5 L478.5 70.5 L479.5 70.5 L480.5 70.5 L481.5 70.5 L482.5 70.4 L483.5 70.4 L484.5 70.4 L485.5 70.3 L486.5 70.3 L487.5 70.2 L488.5 70.1 L489.5 70.1 L490.5 70.0 L491.5 69.9 L492.5 69.8 L493.5 69.7 L494.5 69.6 L495.5 69.5 L496.5 69.4 L497.5 69.2 L498.5 69.1 L499.5 69.0 L500.5 68.9 L501.5 68.7 L502.5 68.6 L503.5 68.4 L504.5 68.3 L505.5 68.2 L506.5 68.0 L507.5 67.8 L508.5 67.7 L509.5 67.5 L510.5 67.4 L511.5 67.2 L512.5 67.0 L513.5 66.9 L514.5 66.7 L515.5 66.5 L516.5 66.3 L517.5 66.1 L518.5 66.0 L519.5 65.8 L520.5 65.6 L521.5 65.4 L522.5 65.2 L523.5 65.0 L524.5 64.8 L525.5 64.6 L526.5 64.5 L527.5 64.3 L528.5 64.1 L529.5 63.9 L530.5 63.7 L531.5 63.5 L532.5 63.3 L533.5 63.1 L534.5 62.9 L535.5 62.7 L536.5 62.5 L537.5 62.3 L538.5 62.1 L539.5 61.8 L540.5 61.6 L541.5 61.4 L542.5 61.2 L543.5 61.0 L544.5 60.8 L545.5 60.6 L546.5 60.4 L547.5 60.2 L548.5 60.0 L549.5 59.8 L550.5 59.5 L551.5 59.3 L552.5 59.1 L553.5 58.9 L554.5 58.7 L555.5 58.5 L556.5 58.3 L557.5 58.1 L558.5 57.8 L559.5 57.6 L560.5 57.4 L561.5 57.2 L562.5 57.0 L563.5 56.8 L564.5 56.6 L565.5 56.3 L566.5 56.1 L567.5 55.9 L568.5 55.7 L569.5 55.5 L570.5 55.3 L571.5 55.0 L572.5 54.8 L573.5 54.6 L574.5 54.4 L575.5 54.2 L576.5 54.0 L577.5 53.7 L578.5 53.5 L579.5 53.3 L580.5 53.1 L581.5 52.9 L582.5 52.6 L583.5 52.4 L584.5 52.2 L585.5 52.0 L586.5 51.8 L587.5 51.6 L588.5 51.3 L589.5 51.1 L590.5 50.9 L591.5 50.7 L592.5 50.5 L593.5 50.2 L594.5 50.0 L595.5 49.8 L596.5 49.6 L597.5 49.4 L598.5 49.2 L599.5 48.9 L600.5 48.7 L601.5 48.5 L602.5 48.3 L603.5 48.1 L604.5 47.8 L605.5 47.6 L606.5 47.4 L607.5 47.2 L608.5 47.0 L609.5 46.7 L610.5 46.5 L611.5 46.3 L612.5 46.1 L613.5 45.9 L614.5 45.6 L615.5 45.4 L616.5 45.2 L617.5 45.0 L618.5 44.8 L619.5 44.5 L620.5 44.3 L621.5 44.1 L622.5 43.9 L623.5 43.7 L624.5 43.4 L625.5 43.2 L626.5 43.0 L627.5 42.8 L628.5 42.6 L629.5 42.3 L630.5 42.1 L631.5 41.9 L632.5 41.7 L633.5 41.5 L634.5 41.2 L635.5 41.0 L636.5 40.8 L637.5 40.6 L638.5 40.4 L639.5 40.1 L640.5 39.9 L641.5 39.7 L642.5 39.5 L643.5 39.3 L644.5 39.0 L645.5 38.8 L646.5 38.6 L647.5 38.4 L648.5 38.2 L649.5 37.9 L650.5 37.7 L651.5 37.5 L652.5 37.3 L653.5 37.1 L654.5 36.8 L655.5 36.6 L656.5 36.4 L657.5 36.2 L658.5 36.0 L659.5 35.7 L660.5 35.5 L661.5 35.3 L662.5 35.1 L663.5 34.9 L664.5 34.6 L665.5 34.4 L666.5 34.2 L667.5 34.0 L668.5 33.8 L669.5 33.5 L670.5 33.3 L671.5 33.1 L672.5 32.9 L673.5 32.7 L674.5 32.4 L675.5 32.2 L676.5 32.0 L677.5 31.8 L678.5 31.6 L679.5 31.3 L680.5 31.1 L681.5 30.9 L682.5 30.7 L683.5 30.5 L684.5 30.2 L685.5 30.0 L686.5 29.8 L687.5 29.6 L688.5 29.4 L689.5 29.1 L690.5 28.9 L691.5 28.7 L692.5 28.5 L693.5 28.3 L694.5 28.0 L695.5 27.8 L696.5 27.6 L697.5 27.4 L698.5 27.2 L699.5 26.9 L700.5 26.7 L701.5 26.5 L702.5 26.3 L703.5 26.1 L704.5 25.8 L705.5 25.6 L706.5 25.4 L707.5 25.2 L708.5 25.0 L709.5 24.7 L710.5 24.5 L711.5 24.3 L712.5 24.1 L713.5 23.9 L714.5 23.6 L715.5 23.4 L716.5 23.2 L717.5 23.0 L718.5 22.8 L719.5 22.5 L720.5 22.3 L721.5 22.1 L722.5 21.9 L723.5 21.7 L724.5 21.4 L725.5 21.2 L726.5 21.0 L727.5 20.8 L728.5 20.6 L729.5 20.3 L730.5 20.1 L731.5 19.9 L732.5 19.7 L733.5 19.5 L734.5 19.2 L735.5 19.0 L736.5 18.8 L737.5 18.6 L738.5 18.4 L739.5 18.1 L740.5 17.9 L741.5 17.7 L742.5 17.5 L743.5 17.3 L744.5 17.0 L745.5 16.8 L746.5 16.6 L747.5 16.4 L748.5 16.2 L749.5 15.9 L750.5 15.7 L751.5 15.5 L752.5 15.3 L753.5 15.1 L754.5 14.8 L755.5 14.6 L756.5 14.4 L757.5 14.2 L758.5 14.0 L759.5 13.7 L760.5 13.5 L761.5 13.3 L762.5 13.1 L763.5 12.9 L764.5 12.6 L765.5 12.4 L766.5 12.2 L767.5 12.0 L768.5 11.8 L769.5 11.5 L770.5 11.3 L771.5 11.1 L772.5 10.9 L773.5 10.7 L774.5 10.4 L775.5 10.2 L776.5 10.0 L777.5 9.8 L778.5 9.6 L779.5 9.3 L780.5 9.1 L781.5 8.9 L782.5 8.7 L783.5 8.5 L784.5 8.2 L785.5 8.0 L786.5 7.8 L787.5 7.6 L788.5 7.4 L789.5 7.1 L790.5 6.9 L791.5 6.7 L792.5 6.5 L793.5 6.3 L794.5 6.0 L795.5 5.8 L796.5 5.6 L797.5 5.4 L798.5 5.2 L799.5 4.9 L800.5 4.7 L801.5 4.5 L802.5 4.3 L803.5 4.1 L804.5 3.8 L805.5 3.6 L806.5 3.4 L807.5 3.2 L808.5 3.0 L809.5 2.7 L810.5 2.5 L811.5 2.3 L812.5 2.1 L813.5 1.9 L814.5 1.6 L815.5 1.4 L816.5 1.2 L817.5 1.0 L818.5 0.8 L819.5 0.5 L820.5 0.3 L821.5 0.1 L822.5 -0.1 L823.5 -0.3 L824.5 -0.6 L825.5 -0.8 L826.5 -1.0 L827.5 -1.2 L828.5 -1.4 L829.5 -1.7 L830.5 -1.9 L831.5 -2.1 L832.5 -2.3 L833.5 -2.5 L834.5 -2.8 L835.5 -3.0 L836.5 -3.2 L837.5 -3.4 L838.5 -3.6 L839.5 -3.9 L840.5 -4.1 L841.5 -4.3 L842.5 -4.5 L843.5 -4.7 L844.5 -5.0 L845.5 -5.2 L846.5 -5.4 L847.5 -5.6 L848.5 -5.8 L849.5 -6.1 L850.5 -6.3 L851.5 -6.5 L852.5 -6.7 L853.5 -6.9 L854.5 -7.2 L855.5 -7.4 L856.5 -7.6 L857.5 -7.8 L858.5 -8.0 L859.5 -8.3 L860.5 -8.5 L861.5 -8.7 L862.5 -8.9 L863.5 -9.1 L864.5 -9.4 L865.5 -9.6 L866.5 -9.8 L867.0 -9.9 M382.0 -9.1 L383.0 -6.9 L384.0 -4.8 L385.0 -2.6 L386.0 -0.5 L387.0 1.6 L388.0 3.7 L389.0 5.8 L390.0 7.9 L391.0 9.9 L392.0 11.9 L393.0 13.9 L394.0 15.9 L395.0 17.8 L396.0 19.8 L397.0 21.6 L398.0 23.5 L399.0 25.4 L400.0 27.2 L401.0 29.0 L402.0 30.7 L403.0 32.5 L404.0 34.2 L405.0 35.9 L406.0 37.5 L407.0 39.1 L408.0 40.7 L409.0 42.3 L410.0 43.8 L411.0 45.3 L412.0 46.8 L413.0 48.2 L414.0 49.6 L415.0 51.0 L416.0 52.3 L417.0 53.6 L418.0 54.9 L419.0 56.2 L420.0 57.4 L421.0 58.5 L422.0 59.7 L423.0 60.8 L424.0 61.9 L425.0 62.9 L426.0 63.9 L427.0 64.9 L428.0 65.8 L429.0 66.7 L430.0 67.6 L431.0 68.5 L432.0 69.3 L433.0 70.1 L434.0 70.8 L435.0 71.5 L436.0 72.2 L437.0 72.9 L438.0 73.5 L439.0 74.2 L440.0 74.7 L527.5 74.9 L528.5 74.7 L529.5 74.5 L530.5 74.3 L531.5 74.1 L532.5 73.8 L533.5 73.6 L534.5 73.4 L535.5 73.2 L536.5 73.0 L537.5 72.8 L538.5 72.6 L539.5 72.4 L540.5 72.2 L541.5 72.0 L542.5 71.8 L543.5 71.5 L544.5 71.3 L545.5 71.1 L546.5 70.9 L547.5 70.7 L548.5 70.5 L549.5 70.3 L550.5 70.1 L551.5 69.8 L552.5 69.6 L553.5 69.4 L554.5 69.2 L555.5 69.0 L556.5 68.8 L557.5 68.6 L558.5 68.3 L559.5 68.1 L560.5 67.9 L561.5 67.7 L562.5 67.5 L563.5 67.3 L564.5 67.0 L565.5 66.8 L566.5 66.6 L567.5 66.4 L568.5 66.2 L569.5 66.0 L570.5 65.7 L571.5 65.5 L572.5 65.3 L573.5 65.1 L574.5 64.9 L575.5 64.6 L576.5 64.4 L577.5 64.2 L578.5 64.0 L579.5 63.8 L580.5 63.6 L581.5 63.3 L582.5 63.1 L583.5 62.9 L584.5 62.7 L585.5 62.5 L586.5 62.2 L587.5 62.0 L588.5 61.8 L589.5 61.6 L590.5 61.4 L591.5 61.2 L592.5 60.9 L593.5 60.7 L594.5 60.5 L595.5 60.3 L596.5 60.1 L597.5 59.8 L598.5 59.6 L599.5 59.4 L600.5 59.2 L601.5 59.0 L602.5 58.7 L603.5 58.5 L604.5 58.3 L605.5 58.1 L606.5 57.9 L607.5 57.6 L608.5 57.4 L609.5 57.2 L610.5 57.0 L611.5 56.8 L612.5 56.5 L613.5 56.3 L614.5 56.1 L615.5 55.9 L616.5 55.7 L617.5 55.4 L618.5 55.2 L619.5 55.0 L620.5 54.8 L621.5 54.6 L622.5 54.3 L623.5 54.1 L624.5 53.9 L625.5 53.7 L626.5 53.5 L627.5 53.2 L628.5 53.0 L629.5 52.8 L630.5 52.6 L631.5 52.4 L632.5 52.1 L633.5 51.9 L634.5 51.7 L635.5 51.5 L636.5 51.3 L637.5 51.0 L638.5 50.8 L639.5 50.6 L640.5 50.4 L641.5 50.2 L642.5 49.9 L643.5 49.7 L644.5 49.5 L645.5 49.3 L646.5 49.1 L647.5 48.8 L648.5 48.6 L649.5 48.4 L650.5 48.2 L651.5 48.0 L652.5 47.7 L653.5 47.5 L654.5 47.3 L655.5 47.1 L656.5 46.9 L657.5 46.6 L658.5 46.4 L659.5 46.2 L660.5 46.0 L661.5 45.8 L662.5 45.5 L663.5 45.3 L664.5 45.1 L665.5 44.9 L666.5 44.7 L667.5 44.4 L668.5 44.2 L669.5 44.0 L670.5 43.8 L671.5 43.6 L672.5 43.3 L673.5 43.1 L674.5 42.9 L675.5 42.7 L676.5 42.5 L677.5 42.2 L678.5 42.0 L679.5 41.8 L680.5 41.6 L681.5 41.4 L682.5 41.1 L683.5 40.9 L684.5 40.7 L685.5 40.5 L686.5 40.3 L687.5 40.0 L688.5 39.8 L689.5 39.6 L690.5 39.4 L691.5 39.2 L692.5 38.9 L693.5 38.7 L694.5 38.5 L695.5 38.3 L696.5 38.1 L697.5 37.8 L698.5 37.6 L699.5 37.4 L700.5 37.2 L701.5 37.0 L702.5 36.7 L703.5 36.5 L704.5 36.3 L705.5 36.1 L706.5 35.9 L707.5 35.6 L708.5 35.4 L709.5 35.2 L710.5 35.0 L711.5 34.8 L712.5 34.5 L713.5 34.3 L714.5 34.1 L715.5 33.9 L716.5 33.7 L717.5 33.4 L718.5 33.2 L719.5 33.0 L720.5 32.8 L721.5 32.6 L722.5 32.3 L723.5 32.1 L724.5 31.9 L725.5 31.7 L726.5 31.5 L727.5 31.2 L728.5 31.0 L729.5 30.8 L730.5 30.6 L731.5 30.4 L732.5 30.1 L733.5 29.9 L734.5 29.7 L735.5 29.5 L736.5 29.3 L737.5 29.0 L738.5 28.8 L739.5 28.6 L740.5 28.4 L741.5 28.2 L742.5 27.9 L743.5 27.7 L744.5 27.5 L745.5 27.3 L746.5 27.1 L747.5 26.8 L748.5 26.6 L749.5 26.4 L750.5 26.2 L751.5 26.0 L752.5 25.7 L753.5 25.5 L754.5 25.3 L755.5 25.1 L756.5 24.9 L757.5 24.6 L758.5 24.4 L759.5 24.2 L760.5 24.0 L761.5 23.8 L762.5 23.5 L763.5 23.3 L764.5 23.1 L765.5 22.9 L766.5 22.7 L767.5 22.4 L768.5 22.2 L769.5 22.0 L770.5 21.8 L771.5 21.6 L772.5 21.3 L773.5 21.1 L774.5 20.9 L775.5 20.7 L776.5 20.5 L777.5 20.2 L778.5 20.0 L779.5 19.8 L780.5 19.6 L781.5 19.4 L782.5 19.1 L783.5 18.9 L784.5 18.7 L785.5 18.5 L786.5 18.3 L787.5 18.0 L788.5 17.8 L789.5 17.6 L790.5 17.4 L791.5 17.2 L792.5 16.9 L793.5 16.7 L794.5 16.5 L795.5 16.3 L796.5 16.1 L797.5 15.8 L798.5 15.6 L799.5 15.4 L800.5 15.2 L801.5 15.0 L802.5 14.7 L803.5 14.5 L804.5 14.3 L805.5 14.1 L806.5 13.9 L807.5 13.6 L808.5 13.4 L809.5 13.2 L810.5 13.0 L811.5 12.8 L812.5 12.5 L813.5 12.3 L814.5 12.1 L815.5 11.9 L816.5 11.7 L817.5 11.4 L818.5 11.2 L819.5 11.0 L820.5 10.8 L821.5 10.6 L822.5 10.3 L823.5 10.1 L824.5 9.9 L825.5 9.7 L826.5 9.5 L827.5 9.2 L828.5 9.0 L829.5 8.8 L830.5 8.6 L831.5 8.4 L832.5 8.1 L833.5 7.9 L834.5 7.7 L835.5 7.5 L836.5 7.3 L837.5 7.0 L838.5 6.8 L839.5 6.6 L840.5 6.4 L841.5 6.2 L842.5 5.9 L843.5 5.7 L844.5 5.5 L845.5 5.3 L846.5 5.1 L847.5 4.8 L848.5 4.6 L849.5 4.4 L850.5 4.2 L851.5 4.0 L852.5 3.7 L853.5 3.5 L854.5 3.3 L855.5 3.1 L856.5 2.9 L857.5 2.6 L858.5 2.4 L859.5 2.2 L860.5 2.0 L861.5 1.8 L862.5 1.5 L863.5 1.3 L864.5 1.1 L865.5 0.9 L866.5 0.7 L867.5 0.4 L868.5 0.2 L869.5 0.0 L870.5 -0.2 L871.5 -0.4 L872.5 -0.7 L873.5 -0.9 L874.5 -1.1 L875.5 -1.3 L876.5 -1.5 L877.5 -1.8 L878.5 -2.0 L879.5 -2.2 L880.5 -2.4 L881.5 -2.6 L882.5 -2.9 L883.5 -3.1 L884.5 -3.3 L885.5 -3.5 L886.5 -3.7 L887.5 -4.0 L888.5 -4.2 L889.5 -4.4 L890.5 -4.6 L891.5 -4.8 L892.5 -5.1 L893.5 -5.3 L894.5 -5.5 L895.5 -5.7 L896.5 -5.9 L897.5 -6.2 L898.5 -6.4 L899.5 -6.6 L899.5 -6.6 M369.5 -9.4 L370.5 -7.1 L371.5 -4.9 L372.5 -2.6 L373.5 -0.4 L374.5 1.8 L375.5 4.0 L376.5 6.2 L377.5 8.3 L378.5 10.5 L379.5 12.6 L380.5 14.7 L381.5 16.8 L382.5 18.8 L383.5 20.9 L384.5 22.9 L385.5 24.9 L386.5 26.9 L387.5 28.9 L388.5 30.8 L389.5 32.7 L390.5 34.6 L391.5 36.4 L392.5 38.3 L393.5 40.1 L394.5 41.9 L395.5 43.6 L396.5 45.3 L397.5 47.0 L398.5 48.7 L399.5 50.3 L400.5 51.9 L401.5 53.5 L402.5 55.1 L403.5 56.6 L404.5 58.1 L405.5 59.5 L406.5 60.9 L407.5 62.3 L408.5 63.7 L409.5 65.0 L410.5 66.3 L411.5 67.5 L412.5 68.8 L413.5 70.0 L414.5 71.1 L415.5 72.2 L416.5 73.3 L417.5 74.4 L576.5 74.9 L577.5 74.7 L578.5 74.5 L579.5 74.2 L580.5 74.0 L581.5 73.8 L582.5 73.6 L583.5 73.4 L584.5 73.2 L585.5 72.9 L586.5 72.7 L587.5 72.5 L588.5 72.3 L589.5 72.1 L590.5 71.8 L591.5 71.6 L592.5 71.4 L593.5 71.2 L594.5 71.0 L595.5 70.7 L596.5 70.5 L597.5 70.3 L598.5 70.1 L599.5 69.9 L600.5 69.6 L601.5 69.4 L602.5 69.2 L603.5 69.0 L604.5 68.8 L605.5 68.5 L606.5 68.3 L607.5 68.1 L608.5 67.9 L609.5 67.7 L610.5 67.4 L611.5 67.2 L612.5 67.0 L613.5 66.8 L614.5 66.6 L615.5 66.3 L616.5 66.1 L617.5 65.9 L618.5 65.7 L619.5 65.5 L620.5 65.2 L621.5 65.0 L622.5 64.8 L623.5 64.6 L624.5 64.4 L625.5 64.1 L626.5 63.9 L627.5 63.7 L628.5 63.5 L629.5 63.3 L630.5 63.0 L631.5 62.8 L632.5 62.6 L633.5 62.4 L634.5 62.2 L635.5 61.9 L636.5 61.7 L637.5 61.5 L638.5 61.3 L639.5 61.1 L640.5 60.8 L641.5 60.6 L642.5 60.4 L643.5 60.2 L644.5 60.0 L645.5 59.7 L646.5 59.5 L647.5 59.3 L648.5 59.1 L649.5 58.9 L650.5 58.6 L651.5 58.4 L652.5 58.2 L653.5 58.0 L654.5 57.8 L655.5 57.5 L656.5 57.3 L657.5 57.1 L658.5 56.9 L659.5 56.7 L660.5 56.4 L661.5 56.2 L662.5 56.0 L663.5 55.8 L664.5 55.6 L665.5 55.3 L666.5 55.1 L667.5 54.9 L668.5 54.7 L669.5 54.5 L670.5 54.2 L671.5 54.0 L672.5 53.8 L673.5 53.6 L674.5 53.4 L675.5 53.1 L676.5 52.9 L677.5 52.7 L678.5 52.5 L679.5 52.3 L680.5 52.0 L681.5 51.8 L682.5 51.6 L683.5 51.4 L684.5 51.2 L685.5 50.9 L686.5 50.7 L687.5 50.5 L688.5 50.3 L689.5 50.1 L690.5 49.8 L691.5 49.6 L692.5 49.4 L693.5 49.2 L694.5 49.0 L695.5 48.7 L696.5 48.5 L697.5 48.3 L698.5 48.1 L699.5 47.9 L700.5 47.6 L701.5 47.4 L702.5 47.2 L703.5 47.0 L704.5 46.8 L705.5 46.5 L706.5 46.3 L707.5 46.1 L708.5 45.9 L709.5 45.7 L710.5 45.4 L711.5 45.2 L712.5 45.0 L713.5 44.8 L714.5 44.6 L715.5 44.3 L716.5 44.1 L717.5 43.9 L718.5 43.7 L719.5 43.5 L720.5 43.2 L721.5 43.0 L722.5 42.8 L723.5 42.6 L724.5 42.4 L725.5 42.1 L726.5 41.9 L727.5 41.7 L728.5 41.5 L729.5 41.3 L730.5 41.0 L731.5 40.8 L732.5 40.6 L733.5 40.4 L734.5 40.2 L735.5 39.9 L736.5 39.7 L737.5 39.5 L738.5 39.3 L739.5 39.1 L740.5 38.8 L741.5 38.6 L742.5 38.4 L743.5 38.2 L744.5 38.0 L745.5 37.7 L746.5 37.5 L747.5 37.3 L748.5 37.1 L749.5 36.9 L750.5 36.6 L751.5 36.4 L752.5 36.2 L753.5 36.0 L754.5 35.8 L755.5 35.5 L756.5 35.3 L757.5 35.1 L758.5 34.9 L759.5 34.7 L760.5 34.4 L761.5 34.2 L762.5 34.0 L763.5 33.8 L764.5 33.6 L765.5 33.3 L766.5 33.1 L767.5 32.9 L768.5 32.7 L769.5 32.5 L770.5 32.2 L771.5 32.0 L772.5 31.8 L773.5 31.6 L774.5 31.4 L775.5 31.1 L776.5 30.9 L777.5 30.7 L778.5 30.5 L779.5 30.3 L780.5 30.0 L781.5 29.8 L782.5 29.6 L783.5 29.4 L784.5 29.2 L785.5 28.9 L786.5 28.7 L787.5 28.5 L788.5 28.3 L789.5 28.1 L790.5 27.8 L791.5 27.6 L792.5 27.4 L793.5 27.2 L794.5 27.0 L795.5 26.7 L796.5 26.5 L797.5 26.3 L798.5 26.1 L799.5 25.9 L800.5 25.6 L801.5 25.4 L802.5 25.2 L803.5 25.0 L804.5 24.8 L805.5 24.5 L806.5 24.3 L807.5 24.1 L808.5 23.9 L809.5 23.7 L810.5 23.4 L811.5 23.2 L812.5 23.0 L813.5 22.8 L814.5 22.6 L815.5 22.3 L816.5 22.1 L817.5 21.9 L818.5 21.7 L819.5 21.5 L820.5 21.2 L821.5 21.0 L822.5 20.8 L823.5 20.6 L824.5 20.4 L825.5 20.1 L826.5 19.9 L827.5 19.7 L828.5 19.5 L829.5 19.3 L830.5 19.0 L831.5 18.8 L832.5 18.6 L833.5 18.4 L834.5 18.2 L835.5 17.9 L836.5 17.7 L837.5 17.5 L838.5 17.3 L839.5 17.1 L840.5 16.8 L841.5 16.6 L842.5 16.4 L843.5 16.2 L844.5 16.0 L845.5 15.7 L846.5 15.5 L847.5 15.3 L848.5 15.1 L849.5 14.9 L850.5 14.6 L851.5 14.4 L852.5 14.2 L853.5 14.0 L854.5 13.8 L855.5 13.5 L856.5 13.3 L857.5 13.1 L858.5 12.9 L859.5 12.7 L860.5 12.4 L861.5 12.2 L862.5 12.0 L863.5 11.8 L864.5 11.6 L865.5 11.3 L866.5 11.1 L867.5 10.9 L868.5 10.7 L869.5 10.5 L870.5 10.2 L871.5 10.0 L872.5 9.8 L873.5 9.6 L874.5 9.4 L875.5 9.1 L876.5 8.9 L877.5 8.7 L878.5 8.5 L879.5 8.3 L880.5 8.0 L881.5 7.8 L882.5 7.6 L883.5 7.4 L884.5 7.2 L885.5 6.9 L886.5 6.7 L887.5 6.5 L888.5 6.3 L889.5 6.1 L890.5 5.8 L891.5 5.6 L892.5 5.4 L893.5 5.2 L894.5 5.0 L895.5 4.7 L896.5 4.5 L897.5 4.3 L898.5 4.1 L899.5 3.9 L899.5 3.9 M357.5 -9.0 L358.5 -6.6 L359.5 -4.3 L360.5 -2.0 L361.5 0.3 L362.5 2.6 L363.5 4.9 L364.5 7.1 L365.5 9.4 L366.5 11.6 L367.5 13.8 L368.5 16.0 L369.5 18.2 L370.5 20.3 L371.5 22.5 L372.5 24.6 L373.5 26.7 L374.5 28.8 L375.5 30.8 L376.5 32.9 L377.5 34.9 L378.5 36.9 L379.5 38.9 L380.5 40.9 L381.5 42.8 L382.5 44.7 L383.5 46.6 L384.5 48.4 L385.5 50.3 L386.5 52.1 L387.5 53.9 L388.5 55.6 L389.5 57.3 L390.5 59.0 L391.5 60.7 L392.5 62.3 L393.5 63.9 L394.5 65.5 L395.5 67.1 L396.5 68.6 L397.5 70.1 L398.5 71.5 L399.5 72.9 L400.5 74.3 L624.5 74.8 L625.5 74.6 L626.5 74.4 L627.5 74.2 L628.5 73.9 L629.5 73.7 L630.5 73.5 L631.5 73.3 L632.5 73.1 L633.5 72.8 L634.5 72.6 L635.5 72.4 L636.5 72.2 L637.5 72.0 L638.5 71.7 L639.5 71.5 L640.5 71.3 L641.5 71.1 L642.5 70.9 L643.5 70.6 L644.5 70.4 L645.5 70.2 L646.5 70.0 L647.5 69.8 L648.5 69.5 L649.5 69.3 L650.5 69.1 L651.5 68.9 L652.5 68.7 L653.5 68.4 L654.5 68.2 L655.5 68.0 L656.5 67.8 L657.5 67.6 L658.5 67.3 L659.5 67.1 L660.5 66.9 L661.5 66.7 L662.5 66.5 L663.5 66.2 L664.5 66.0 L665.5 65.8 L666.5 65.6 L667.5 65.4 L668.5 65.1 L669.5 64.9 L670.5 64.7 L671.5 64.5 L672.5 64.3 L673.5 64.0 L674.5 63.8 L675.5 63.6 L676.5 63.4 L677.5 63.2 L678.5 62.9 L679.5 62.7 L680.5 62.5 L681.5 62.3 L682.5 62.1 L683.5 61.8 L684.5 61.6 L685.5 61.4 L686.5 61.2 L687.5 61.0 L688.5 60.7 L689.5 60.5 L690.5 60.3 L691.5 60.1 L692.5 59.9 L693.5 59.6 L694.5 59.4 L695.5 59.2 L696.5 59.0 L697.5 58.8 L698.5 58.5 L699.5 58.3 L700.5 58.1 L701.5 57.9 L702.5 57.7 L703.5 57.4 L704.5 57.2 L705.5 57.0 L706.5 56.8 L707.5 56.6 L708.5 56.3 L709.5 56.1 L710.5 55.9 L711.5 55.7 L712.5 55.5 L713.5 55.2 L714.5 55.0 L715.5 54.8 L716.5 54.6 L717.5 54.4 L718.5 54.1 L719.5 53.9 L720.5 53.7 L721.5 53.5 L722.5 53.3 L723.5 53.0 L724.5 52.8 L725.5 52.6 L726.5 52.4 L727.5 52.2 L728.5 51.9 L729.5 51.7 L730.5 51.5 L731.5 51.3 L732.5 51.1 L733.5 50.8 L734.5 50.6 L735.5 50.4 L736.5 50.2 L737.5 50.0 L738.5 49.7 L739.5 49.5 L740.5 49.3 L741.5 49.1 L742.5 48.9 L743.5 48.6 L744.5 48.4 L745.5 48.2 L746.5 48.0 L747.5 47.8 L748.5 47.5 L749.5 47.3 L750.5 47.1 L751.5 46.9 L752.5 46.7 L753.5 46.4 L754.5 46.2 L755.5 46.0 L756.5 45.8 L757.5 45.6 L758.5 45.3 L759.5 45.1 L760.5 44.9 L761.5 44.7 L762.5 44.5 L763.5 44.2 L764.5 44.0 L765.5 43.8 L766.5 43.6 L767.5 43.4 L768.5 43.1 L769.5 42.9 L770.5 42.7 L771.5 42.5 L772.5 42.3 L773.5 42.0 L774.5 41.8 L775.5 41.6 L776.5 41.4 L777.5 41.2 L778.5 40.9 L779.5 40.7 L780.5 40.5 L781.5 40.3 L782.5 40.1 L783.5 39.8 L784.5 39.6 L785.5 39.4 L786.5 39.2 L787.5 39.0 L788.5 38.7 L789.5 38.5 L790.5 38.3 L791.5 38.1 L792.5 37.9 L793.5 37.6 L794.5 37.4 L795.5 37.2 L796.5 37.0 L797.5 36.8 L798.5 36.5 L799.5 36.3 L800.5 36.1 L801.5 35.9 L802.5 35.7 L803.5 35.4 L804.5 35.2 L805.5 35.0 L806.5 34.8 L807.5 34.6 L808.5 34.3 L809.5 34.1 L810.5 33.9 L811.5 33.7 L812.5 33.5 L813.5 33.2 L814.5 33.0 L815.5 32.8 L816.5 32.6 L817.5 32.4 L818.5 32.1 L819.5 31.9 L820.5 31.7 L821.5 31.5 L822.5 31.3 L823.5 31.0 L824.5 30.8 L825.5 30.6 L826.5 30.4 L827.5 30.2 L828.5 29.9 L829.5 29.7 L830.5 29.5 L831.5 29.3 L832.5 29.1 L833.5 28.8 L834.5 28.6 L835.5 28.4 L836.5 28.2 L837.5 28.0 L838.5 27.7 L839.5 27.5 L840.5 27.3 L841.5 27.1 L842.5 26.9 L843.5 26.6 L844.5 26.4 L845.5 26.2 L846.5 26.0 L847.5 25.8 L848.5 25.5 L849.5 25.3 L850.5 25.1 L851.5 24.9 L852.5 24.7 L853.5 24.4 L854.5 24.2 L855.5 24.0 L856.5 23.8 L857.5 23.6 L858.5 23.3 L859.5 23.1 L860.5 22.9 L861.5 22.7 L862.5 22.5 L863.5 22.2 L864.5 22.0 L865.5 21.8 L866.5 21.6 L867.5 21.4 L868.5 21.1 L869.5 20.9 L870.5 20.7 L871.5 20.5 L872.5 20.3 L873.5 20.0 L874.5 19.8 L875.5 19.6 L876.5 19.4 L877.5 19.2 L878.5 18.9 L879.5 18.7 L880.5 18.5 L881.5 18.3 L882.5 18.1 L883.5 17.8 L884.5 17.6 L885.5 17.4 L886.5 17.2 L887.5 17.0 L888.5 16.7 L889.5 16.5 L890.5 16.3 L891.5 16.1 L892.5 15.9 L893.5 15.6 L894.5 15.4 L895.5 15.2 L896.5 15.0 L897.5 14.8 L898.5 14.5 L899.5 14.3 L899.5 14.3 M345.0 -10.0 L346.0 -7.6 L347.0 -5.2 L348.0 -2.8 L349.0 -0.5 L350.0 1.9 L351.0 4.2 L352.0 6.5 L353.0 8.9 L354.0 11.2 L355.0 13.4 L356.0 15.7 L357.0 18.0 L358.0 20.2 L359.0 22.5 L360.0 24.7 L361.0 26.9 L362.0 29.1 L363.0 31.2 L364.0 33.4 L365.0 35.5 L366.0 37.6 L367.0 39.7 L368.0 41.8 L369.0 43.9 L370.0 45.9 L371.0 47.9 L372.0 49.9 L373.0 51.9 L374.0 53.8 L375.0 55.8 L376.0 57.6 L377.0 59.5 L378.0 61.4 L379.0 63.2 L380.0 65.0 L381.0 66.7 L382.0 68.5 L383.0 70.2 L384.0 71.9 L385.0 73.5 L671.5 74.9 L672.5 74.7 L673.5 74.5 L674.5 74.3 L675.5 74.1 L676.5 73.8 L677.5 73.6 L678.5 73.4 L679.5 73.2 L680.5 73.0 L681.5 72.7 L682.5 72.5 L683.5 72.3 L684.5 72.1 L685.5 71.9 L686.5 71.6 L687.5 71.4 L688.5 71.2 L689.5 71.0 L690.5 70.8 L691.5 70.5 L692.5 70.3 L693.5 70.1 L694.5 69.9 L695.5 69.7 L696.5 69.4 L697.5 69.2 L698.5 69.0 L699.5 68.8 L700.5 68.6 L701.5 68.3 L702.5 68.1 L703.5 67.9 L704.5 67.7 L705.5 67.5 L706.5 67.2 L707.5 67.0 L708.5 66.8 L709.5 66.6 L710.5 66.4 L711.5 66.1 L712.5 65.9 L713.5 65.7 L714.5 65.5 L715.5 65.3 L716.5 65.0 L717.5 64.8 L718.5 64.6 L719.5 64.4 L720.5 64.2 L721.5 63.9 L722.5 63.7 L723.5 63.5 L724.5 63.3 L725.5 63.1 L726.5 62.8 L727.5 62.6 L728.5 62.4 L729.5 62.2 L730.5 62.0 L731.5 61.7 L732.5 61.5 L733.5 61.3 L734.5 61.1 L735.5 60.9 L736.5 60.6 L737.5 60.4 L738.5 60.2 L739.5 60.0 L740.5 59.8 L741.5 59.5 L742.5 59.3 L743.5 59.1 L744.5 58.9 L745.5 58.7 L746.5 58.4 L747.5 58.2 L748.5 58.0 L749.5 57.8 L750.5 57.6 L751.5 57.3 L752.5 57.1 L753.5 56.9 L754.5 56.7 L755.5 56.5 L756.5 56.2 L757.5 56.0 L758.5 55.8 L759.5 55.6 L760.5 55.4 L761.5 55.1 L762.5 54.9 L763.5 54.7 L764.5 54.5 L765.5 54.3 L766.5 54.0 L767.5 53.8 L768.5 53.6 L769.5 53.4 L770.5 53.2 L771.5 52.9 L772.5 52.7 L773.5 52.5 L774.5 52.3 L775.5 52.1 L776.5 51.8 L777.5 51.6 L778.5 51.4 L779.5 51.2 L780.5 51.0 L781.5 50.7 L782.5 50.5 L783.5 50.3 L784.5 50.1 L785.5 49.9 L786.5 49.6 L787.5 49.4 L788.5 49.2 L789.5 49.0 L790.5 48.8 L791.5 48.5 L792.5 48.3 L793.5 48.1 L794.5 47.9 L795.5 47.7 L796.5 47.4 L797.5 47.2 L798.5 47.0 L799.5 46.8 L800.5 46.6 L801.5 46.3 L802.5 46.1 L803.5 45.9 L804.5 45.7 L805.5 45.5 L806.5 45.2 L807.5 45.0 L808.5 44.8 L809.5 44.6 L810.5 44.4 L811.5 44.1 L812.5 43.9 L813.5 43.7 L814.5 43.5 L815.5 43.3 L816.5 43.0 L817.5 42.8 L818.5 42.6 L819.5 42.4 L820.5 42.2 L821.5 41.9 L822.5 41.7 L823.5 41.5 L824.5 41.3 L825.5 41.1 L826.5 40.8 L827.5 40.6 L828.5 40.4 L829.5 40.2 L830.5 40.0 L831.5 39.7 L832.5 39.5 L833.5 39.3 L834.5 39.1 L835.5 38.9 L836.5 38.6 L837.5 38.4 L838.5 38.2 L839.5 38.0 L840.5 37.8 L841.5 37.5 L842.5 37.3 L843.5 37.1 L844.5 36.9 L845.5 36.7 L846.5 36.4 L847.5 36.2 L848.5 36.0 L849.5 35.8 L850.5 35.6 L851.5 35.3 L852.5 35.1 L853.5 34.9 L854.5 34.7 L855.5 34.5 L856.5 34.2 L857.5 34.0 L858.5 33.8 L859.5 33.6 L860.5 33.4 L861.5 33.1 L862.5 32.9 L863.5 32.7 L864.5 32.5 L865.5 32.3 L866.5 32.0 L867.5 31.8 L868.5 31.6 L869.5 31.4 L870.5 31.2 L871.5 30.9 L872.5 30.7 L873.5 30.5 L874.5 30.3 L875.5 30.1 L876.5 29.8 L877.5 29.6 L878.5 29.4 L879.5 29.2 L880.5 29.0 L881.5 28.7 L882.5 28.5 L883.5 28.3 L884.5 28.1 L885.5 27.9 L886.5 27.6 L887.5 27.4 L888.5 27.2 L889.5 27.0 L890.5 26.8 L891.5 26.5 L892.5 26.3 L893.5 26.1 L894.5 25.9 L895.5 25.7 L896.5 25.4 L897.5 25.2 L898.5 25.0 L899.5 24.8 L899.5 24.8 M333.5 -8.8 L334.5 -6.4 L335.5 -4.0 L336.5 -1.6 L337.5 0.8 L338.5 3.2 L339.5 5.6 L340.5 8.0 L341.5 10.3 L342.5 12.7 L343.5 15.0 L344.5 17.4 L345.5 19.7 L346.5 22.0 L347.5 24.3 L348.5 26.6 L349.5 28.9 L350.5 31.1 L351.5 33.4 L352.5 35.6 L353.5 37.8 L354.5 40.0 L355.5 42.2 L356.5 44.3 L357.5 46.5 L358.5 48.6 L359.5 50.7 L360.5 52.8 L361.5 54.8 L362.5 56.9 L363.5 58.9 L364.5 60.9 L365.5 62.9 L366.5 64.9 L367.5 66.8 L368.5 68.7 L369.5 70.6 L370.5 72.4 L371.5 74.3 L719.5 74.8 L720.5 74.6 L721.5 74.4 L722.5 74.2 L723.5 74.0 L724.5 73.7 L725.5 73.5 L726.5 73.3 L727.5 73.1 L728.5 72.9 L729.5 72.6 L730.5 72.4 L731.5 72.2 L732.5 72.0 L733.5 71.8 L734.5 71.5 L735.5 71.3 L736.5 71.1 L737.5 70.9 L738.5 70.7 L739.5 70.4 L740.5 70.2 L741.5 70.0 L742.5 69.8 L743.5 69.6 L744.5 69.3 L745.5 69.1 L746.5 68.9 L747.5 68.7 L748.5 68.5 L749.5 68.2 L750.5 68.0 L751.5 67.8 L752.5 67.6 L753.5 67.4 L754.5 67.1 L755.5 66.9 L756.5 66.7 L757.5 66.5 L758.5 66.3 L759.5 66.0 L760.5 65.8 L761.5 65.6 L762.5 65.4 L763.5 65.2 L764.5 64.9 L765.5 64.7 L766.5 64.5 L767.5 64.3 L768.5 64.1 L769.5 63.8 L770.5 63.6 L771.5 63.4 L772.5 63.2 L773.5 63.0 L774.5 62.7 L775.5 62.5 L776.5 62.3 L777.5 62.1 L778.5 61.9 L779.5 61.6 L780.5 61.4 L781.5 61.2 L782.5 61.0 L783.5 60.8 L784.5 60.5 L785.5 60.3 L786.5 60.1 L787.5 59.9 L788.5 59.7 L789.5 59.4 L790.5 59.2 L791.5 59.0 L792.5 58.8 L793.5 58.6 L794.5 58.3 L795.5 58.1 L796.5 57.9 L797.5 57.7 L798.5 57.5 L799.5 57.2 L800.5 57.0 L801.5 56.8 L802.5 56.6 L803.5 56.4 L804.5 56.1 L805.5 55.9 L806.5 55.7 L807.5 55.5 L808.5 55.3 L809.5 55.0 L810.5 54.8 L811.5 54.6 L812.5 54.4 L813.5 54.2 L814.5 53.9 L815.5 53.7 L816.5 53.5 L817.5 53.3 L818.5 53.1 L819.5 52.8 L820.5 52.6 L821.5 52.4 L822.5 52.2 L823.5 52.0 L824.5 51.7 L825.5 51.5 L826.5 51.3 L827.5 51.1 L828.5 50.9 L829.5 50.6 L830.5 50.4 L831.5 50.2 L832.5 50.0 L833.5 49.8 L834.5 49.5 L835.5 49.3 L836.5 49.1 L837.5 48.9 L838.5 48.7 L839.5 48.4 L840.5 48.2 L841.5 48.0 L842.5 47.8 L843.5 47.6 L844.5 47.3 L845.5 47.1 L846.5 46.9 L847.5 46.7 L848.5 46.5 L849.5 46.2 L850.5 46.0 L851.5 45.8 L852.5 45.6 L853.5 45.4 L854.5 45.1 L855.5 44.9 L856.5 44.7 L857.5 44.5 L858.5 44.3 L859.5 44.0 L860.5 43.8 L861.5 43.6 L862.5 43.4 L863.5 43.2 L864.5 42.9 L865.5 42.7 L866.5 42.5 L867.5 42.3 L868.5 42.1 L869.5 41.8 L870.5 41.6 L871.5 41.4 L872.5 41.2 L873.5 41.0 L874.5 40.7 L875.5 40.5 L876.5 40.3 L877.5 40.1 L878.5 39.9 L879.5 39.6 L880.5 39.4 L881.5 39.2 L882.5 39.0 L883.5 38.8 L884.5 38.5 L885.5 38.3 L886.5 38.1 L887.5 37.9 L888.5 37.7 L889.5 37.4 L890.5 37.2 L891.5 37.0 L892.5 36.8 L893.5 36.6 L894.5 36.3 L895.5 36.1 L896.5 35.9 L897.5 35.7 L898.5 35.5 L899.5 35.2 L899.5 35.2 M321.5 -9.1 L322.5 -6.6 L323.5 -4.1 L324.5 -1.7 L325.5 0.7 L326.5 3.2 L327.5 5.6 L328.5 8.0 L329.5 10.4 L330.5 12.8 L331.5 15.2 L332.5 17.6 L333.5 20.0 L334.5 22.3 L335.5 24.7 L336.5 27.0 L337.5 29.4 L338.5 31.7 L339.5 34.0 L340.5 36.3 L341.5 38.6 L342.5 40.9 L343.5 43.1 L344.5 45.4 L345.5 47.6 L346.5 49.8 L347.5 52.0 L348.5 54.2 L349.5 56.3 L350.5 58.5 L351.5 60.6 L352.5 62.7 L353.5 64.8 L354.5 66.8 L355.5 68.9 L356.5 70.9 L357.5 72.9 L358.5 74.9 L767.0 74.9 L768.0 74.6 L769.0 74.4 L770.0 74.2 L771.0 74.0 L772.0 73.8 L773.0 73.5 L774.0 73.3 L775.0 73.1 L776.0 72.9 L777.0 72.7 L778.0 72.4 L779.0 72.2 L780.0 72.0 L781.0 71.8 L782.0 71.6 L783.0 71.3 L784.0 71.1 L785.0 70.9 L786.0 70.7 L787.0 70.5 L788.0 70.2 L789.0 70.0 L790.0 69.8 L791.0 69.6 L792.0 69.4 L793.0 69.1 L794.0 68.9 L795.0 68.7 L796.0 68.5 L797.0 68.3 L798.0 68.0 L799.0 67.8 L800.0 67.6 L801.0 67.4 L802.0 67.2 L803.0 66.9 L804.0 66.7 L805.0 66.5 L806.0 66.3 L807.0 66.1 L808.0 65.8 L809.0 65.6 L810.0 65.4 L811.0 65.2 L812.0 65.0 L813.0 64.7 L814.0 64.5 L815.0 64.3 L816.0 64.1 L817.0 63.9 L818.0 63.6 L819.0 63.4 L820.0 63.2 L821.0 63.0 L822.0 62.8 L823.0 62.5 L824.0 62.3 L825.0 62.1 L826.0 61.9 L827.0 61.7 L828.0 61.4 L829.0 61.2 L830.0 61.0 L831.0 60.8 L832.0 60.6 L833.0 60.3 L834.0 60.1 L835.0 59.9 L836.0 59.7 L837.0 59.5 L838.0 59.2 L839.0 59.0 L840.0 58.8 L841.0 58.6 L842.0 58.4 L843.0 58.1 L844.0 57.9 L845.0 57.7 L846.0 57.5 L847.0 57.3 L848.0 57.0 L849.0 56.8 L850.0 56.6 L851.0 56.4 L852.0 56.2 L853.0 55.9 L854.0 55.7 L855.0 55.5 L856.0 55.3 L857.0 55.1 L858.0 54.8 L859.0 54.6 L860.0 54.4 L861.0 54.2 L862.0 54.0 L863.0 53.7 L864.0 53.5 L865.0 53.3 L866.0 53.1 L867.0 52.9 L868.0 52.6 L869.0 52.4 L870.0 52.2 L871.0 52.0 L872.0 51.8 L873.0 51.5 L874.0 51.3 L875.0 51.1 L876.0 50.9 L877.0 50.7 L878.0 50.4 L879.0 50.2 L880.0 50.0 L881.0 49.8 L882.0 49.6 L883.0 49.3 L884.0 49.1 L885.0 48.9 L886.0 48.7 L887.0 48.5 L888.0 48.2 L889.0 48.0 L890.0 47.8 L891.0 47.6 L892.0 47.4 L893.0 47.1 L894.0 46.9 L895.0 46.7 L896.0 46.5 L897.0 46.3 L898.0 46.0 L899.0 45.8 L899.5 45.7 M309.5 -9.5 L310.5 -7.0 L311.5 -4.5 L312.5 -2.0 L313.5 0.5 L314.5 2.9 L315.5 5.4 L316.5 7.9 L317.5 10.3 L318.5 12.7 L319.5 15.2 L320.5 17.6 L321.5 20.0 L322.5 22.4 L323.5 24.8 L324.5 27.2 L325.5 29.6 L326.5 32.0 L327.5 34.3 L328.5 36.7 L329.5 39.0 L330.5 41.4 L331.5 43.7 L332.5 46.0 L333.5 48.3 L334.5 50.6 L335.5 52.9 L336.5 55.1 L337.5 57.4 L338.5 59.6 L339.5 61.8 L340.5 64.0 L341.5 66.2 L342.5 68.3 L343.5 70.5 L344.5 72.6 L345.5 74.7 L814.5 74.9 L815.5 74.6 L816.5 74.4 L817.5 74.2 L818.5 74.0 L819.5 73.8 L820.5 73.5 L821.5 73.3 L822.5 73.1 L823.5 72.9 L824.5 72.7 L825.5 72.4 L826.5 72.2 L827.5 72.0 L828.5 71.8 L829.5 71.6 L830.5 71.3 L831.5 71.1 L832.5 70.9 L833.5 70.7 L834.5 70.5 L835.5 70.2 L836.5 70.0 L837.5 69.8 L838.5 69.6 L839.5 69.4 L840.5 69.1 L841.5 68.9 L842.5 68.7 L843.5 68.5 L844.5 68.3 L845.5 68.0 L846.5 67.8 L847.5 67.6 L848.5 67.4 L849.5 67.2 L850.5 66.9 L851.5 66.7 L852.5 66.5 L853.5 66.3 L854.5 66.1 L855.5 65.8 L856.5 65.6 L857.5 65.4 L858.5 65.2 L859.5 65.0 L860.5 64.7 L861.5 64.5 L862.5 64.3 L863.5 64.1 L864.5 63.9 L865.5 63.6 L866.5 63.4 L867.5 63.2 L868.5 63.0 L869.5 62.8 L870.5 62.5 L871.5 62.3 L872.5 62.1 L873.5 61.9 L874.5 61.7 L875.5 61.4 L876.5 61.2 L877.5 61.0 L878.5 60.8 L879.5 60.6 L880.5 60.3 L881.5 60.1 L882.5 59.9 L883.5 59.7 L884.5 59.5 L885.5 59.2 L886.5 59.0 L887.5 58.8 L888.5 58.6 L889.5 58.4 L890.5 58.1 L891.5 57.9 L892.5 57.7 L893.5 57.5 L894.5 57.3 L895.5 57.0 L896.5 56.8 L897.5 56.6 L898.5 56.4 L899.5 56.2 L899.5 56.2 M297.5 -10.0 L298.5 -7.5 L299.5 -5.0 L300.5 -2.4 L301.5 0.1 L302.5 2.5 L303.5 5.0 L304.5 7.5 L305.5 10.0 L306.5 12.5 L307.5 14.9 L308.5 17.4 L309.5 19.9 L310.5 22.3 L311.5 24.7 L312.5 27.2 L313.5 29.6 L314.5 32.0 L315.5 34.4 L316.5 36.8 L317.5 39.2 L318.5 41.6 L319.5 44.0 L320.5 46.3 L321.5 48.7 L322.5 51.0 L323.5 53.4 L324.5 55.7 L325.5 58.0 L326.5 60.3 L327.5 62.6 L328.5 64.9 L329.5 67.1 L330.5 69.4 L331.5 71.6 L332.5 73.8 L861.5 75.0 L862.5 74.8 L863.5 74.5 L864.5 74.3 L865.5 74.1 L866.5 73.9 L867.5 73.7 L868.5 73.4 L869.5 73.2 L870.5 73.0 L871.5 72.8 L872.5 72.6 L873.5 72.3 L874.5 72.1 L875.5 71.9 L876.5 71.7 L877.5 71.5 L878.5 71.2 L879.5 71.0 L880.5 70.8 L881.5 70.6 L882.5 70.4 L883.5 70.1 L884.5 69.9 L885.5 69.7 L886.5 69.5 L887.5 69.3 L888.5 69.0 L889.5 68.8 L890.5 68.6 L891.5 68.4 L892.5 68.2 L893.5 67.9 L894.5 67.7 L895.5 67.5 L896.5 67.3 L897.5 67.1 L898.5 66.8 L899.5 66.6 L899.5 66.6 M286.0 -9.3 L287.0 -6.8 L288.0 -4.3 L289.0 -1.7 L290.0 0.8 L291.0 3.3 L292.0 5.8 L293.0 8.3 L294.0 10.8 L295.0 13.3 L296.0 15.8 L297.0 18.3 L298.0 20.8 L299.0 23.2 L300.0 25.7 L301.0 28.2 L302.0 30.6 L303.0 33.1 L304.0 35.5 L305.0 38.0 L306.0 40.4 L307.0 42.8 L308.0 45.2 L309.0 47.6 L310.0 50.0 L311.0 52.4 L312.0 54.8 L313.0 57.2 L314.0 59.5 L315.0 61.9 L316.0 64.2 L317.0 66.5 L318.0 68.9 L319.0 71.2 L320.0 73.4 L320.5 74.6 M274.5 -8.7 L275.5 -6.2 L276.5 -3.7 L277.5 -1.1 L278.5 1.4 L279.5 3.9 L280.5 6.5 L281.5 9.0 L282.5 11.5 L283.5 14.0 L284.5 16.5 L285.5 19.0 L286.5 21.6 L287.5 24.1 L288.5 26.5 L289.5 29.0 L290.5 31.5 L291.5 34.0 L292.5 36.5 L293.5 38.9 L294.5 41.4 L295.5 43.9 L296.5 46.3 L297.5 48.7 L298.5 51.2 L299.5 53.6 L300.5 56.0 L301.5 58.4 L302.5 60.8 L303.5 63.2 L304.5 65.6 L305.5 68.0 L306.5 70.3 L307.5 72.7 L308.0 73.9 M262.5 -9.5 L263.5 -6.9 L264.5 -4.4 L265.5 -1.8 L266.5 0.7 L267.5 3.3 L268.5 5.8 L269.5 8.3 L270.5 10.9 L271.5 13.4 L272.5 15.9 L273.5 18.5 L274.5 21.0 L275.5 23.5 L276.5 26.0 L277.5 28.5 L278.5 31.0 L279.5 33.6 L280.5 36.1 L281.5 38.5 L282.5 41.0 L283.5 43.5 L284.5 46.0 L285.5 48.5 L286.5 50.9 L287.5 53.4 L288.5 55.9 L289.5 58.3 L290.5 60.7 L291.5 63.2 L292.5 65.6 L293.5 68.0 L294.5 70.4 L295.5 72.8 L296.0 74.0 M251.0 -9.0 L252.0 -6.4 L253.0 -3.9 L254.0 -1.3 L255.0 1.2 L256.0 3.8 L257.0 6.4 L258.0 8.9 L259.0 11.5 L260.0 14.0 L261.0 16.5 L262.0 19.1 L263.0 21.6 L264.0 24.2 L265.0 26.7 L266.0 29.2 L267.0 31.7 L268.0 34.3 L269.0 36.8 L270.0 39.3 L271.0 41.8 L272.0 44.3 L273.0 46.8 L274.0 49.3 L275.0 51.8 L276.0 54.3 L277.0 56.8 L278.0 59.2 L279.0 61.7 L280.0 64.2 L281.0 66.6 L282.0 69.1 L283.0 71.5 L284.0 74.0 L284.0 74.0 M239.0 -9.8 L240.0 -7.3 L241.0 -4.7 L242.0 -2.1 L243.0 0.4 L244.0 3.0 L245.0 5.6 L246.0 8.1 L247.0 10.7 L248.0 13.2 L249.0 15.8 L250.0 18.4 L251.0 20.9 L252.0 23.5 L253.0 26.0 L254.0 28.5 L255.0 31.1 L256.0 33.6 L257.0 36.2 L258.0 38.7 L259.0 41.2 L260.0 43.7 L261.0 46.3 L262.0 48.8 L263.0 51.3 L264.0 53.8 L265.0 56.3 L266.0 58.8 L267.0 61.3 L268.0 63.8 L269.0 66.3 L270.0 68.8 L271.0 71.2 L272.0 73.7 L272.5 74.9 M227.5 -9.4 L228.5 -6.8 L229.5 -4.3 L230.5 -1.7 L231.5 0.9 L232.5 3.5 L233.5 6.0 L234.5 8.6 L235.5 11.2 L236.5 13.7 L237.5 16.3 L238.5 18.9 L239.5 21.4 L240.5 24.0 L241.5 26.5 L242.5 29.1 L243.5 31.6 L244.5 34.2 L245.5 36.7 L246.5 39.3 L247.5 41.8 L248.5 44.3 L249.5 46.9 L250.5 49.4 L251.5 51.9 L252.5 54.5 L253.5 57.0 L254.5 59.5 L255.5 62.0 L256.5 64.5 L257.5 67.0 L258.5 69.6 L259.5 72.1 L260.5 74.5 L260.5 74.5 M216.0 -9.0 L217.0 -6.4 L218.0 -3.9 L219.0 -1.3 L220.0 1.3 L221.0 3.9 L222.0 6.5 L223.0 9.0 L224.0 11.6 L225.0 14.2 L226.0 16.7 L227.0 19.3 L228.0 21.9 L229.0 24.4 L230.0 27.0 L231.0 29.6 L232.0 32.1 L233.0 34.7 L234.0 37.2 L235.0 39.8 L236.0 42.4 L237.0 44.9 L238.0 47.5 L239.0 50.0 L240.0 52.5 L241.0 55.1 L242.0 57.6 L243.0 60.2 L244.0 62.7 L245.0 65.2 L246.0 67.7 L247.0 70.3 L248.0 72.8 L248.5 74.0 M203.5 -9.4 L204.5 -6.8 L205.5 -4.2 L206.5 -1.7 L207.5 0.9 L208.5 3.5 L209.5 6.1 L210.5 8.7 L211.5 11.2 L212.5 13.8 L213.5 16.4 L214.5 19.0 L215.5 21.5 L216.5 24.1 L217.5 26.7 L218.5 29.3 L219.5 31.8 L220.5 34.4 L221.5 37.0 L222.5 39.5 L223.5 42.1 L224.5 44.6 L225.5 47.2 L226.5 49.8 L227.5 52.3 L228.5 54.9 L229.5 57.4 L230.5 60.0 L231.5 62.5 L232.5 65.1 L233.5 67.6 L234.5 70.1 L235.5 72.7 L236.0 73.9 M190.5 -9.3 L191.5 -6.7 L192.5 -4.1 L193.5 -1.6 L194.5 1.0 L195.5 3.6 L196.5 6.2 L197.5 8.8 L198.5 11.4 L199.5 13.9 L200.5 16.5 L201.5 19.1 L202.5 21.7 L203.5 24.3 L204.5 26.8 L205.5 29.4 L206.5 32.0 L207.5 34.6 L208.5 37.1 L209.5 39.7 L210.5 42.3 L211.5 44.9 L212.5 47.4 L213.5 50.0 L214.5 52.6 L215.5 55.1 L216.5 57.7 L217.5 60.2 L218.5 62.8 L219.5 65.3 L220.5 67.9 L221.5 70.5 L222.5 73.0 L223.0 74.3 M177.0 -8.7 L178.0 -6.1 L179.0 -3.5 L180.0 -1.0 L181.0 1.6 L182.0 4.2 L183.0 6.8 L184.0 9.4 L185.0 12.0 L186.0 14.6 L187.0 17.2 L188.0 19.7 L189.0 22.3 L190.0 24.9 L191.0 27.5 L192.0 30.1 L193.0 32.7 L194.0 35.2 L195.0 37.8 L196.0 40.4 L197.0 43.0 L198.0 45.5 L199.0 48.1 L200.0 50.7 L201.0 53.3 L202.0 55.8 L203.0 58.4 L204.0 61.0 L205.0 63.5 L206.0 66.1 L207.0 68.7 L208.0 71.2 L209.0 73.8 L209.0 73.8 M162.5 -8.9 L163.5 -6.3 L164.5 -3.7 L165.5 -1.2 L166.5 1.4 L167.5 4.0 L168.5 6.6 L169.5 9.2 L170.5 11.8 L171.5 14.4 L172.5 17.0 L173.5 19.6 L174.5 22.2 L175.5 24.7 L176.5 27.3 L177.5 29.9 L178.5 32.5 L179.5 35.1 L180.5 37.7 L181.5 40.3 L182.5 42.8 L183.5 45.4 L184.5 48.0 L185.5 50.6 L186.5 53.2 L187.5 55.7 L188.5 58.3 L189.5 60.9 L190.5 63.5 L191.5 66.0 L192.5 68.6 L193.5 71.2 L194.5 73.7 L194.5 73.7 M147.0 -9.9 L148.0 -7.3 L149.0 -4.7 L150.0 -2.1 L151.0 0.4 L152.0 3.0 L153.0 5.6 L154.0 8.2 L155.0 10.8 L156.0 13.4 L157.0 16.0 L158.0 18.6 L159.0 21.2 L160.0 23.8 L161.0 26.4 L162.0 29.0 L163.0 31.5 L164.0 34.1 L165.0 36.7 L166.0 39.3 L167.0 41.9 L168.0 44.5 L169.0 47.1 L170.0 49.7 L171.0 52.2 L172.0 54.8 L173.0 57.4 L174.0 60.0 L175.0 62.6 L176.0 65.1 L177.0 67.7 L178.0 70.3 L179.0 72.9 L179.5 74.2 M131.5 -9.1 L132.5 -6.5 L133.5 -3.9 L134.5 -1.3 L135.5 1.2 L136.5 3.8 L137.5 6.4 L138.5 9.0 L139.5 11.6 L140.5 14.2 L141.5 16.8 L142.5 19.4 L143.5 22.0 L144.5 24.6 L145.5 27.2 L146.5 29.8 L147.5 32.4 L148.5 35.0 L149.5 37.6 L150.5 40.1 L151.5 42.7 L152.5 45.3 L153.5 47.9 L154.5 50.5 L155.5 53.1 L156.5 55.7 L157.5 58.3 L158.5 60.9 L159.5 63.4 L160.5 66.0 L161.5 68.6 L162.5 71.2 L163.5 73.8 L163.5 73.8 M115.0 -9.1 L116.0 -6.5 L117.0 -3.9 L118.0 -1.3 L119.0 1.3 L120.0 3.9 L121.0 6.5 L122.0 9.0 L123.0 11.6 L124.0 14.2 L125.0 16.8 L126.0 19.4 L127.0 22.0 L128.0 24.6 L129.0 27.2 L130.0 29.8 L131.0 32.4 L132.0 35.0 L133.0 37.6 L134.0 40.2 L135.0 42.8 L136.0 45.4 L137.0 48.0 L138.0 50.6 L139.0 53.1 L140.0 55.7 L141.0 58.3 L142.0 60.9 L143.0 63.5 L144.0 66.1 L145.0 68.7 L146.0 71.3 L147.0 73.9 L147.0 73.9 M97.5 -9.9 L98.5 -7.3 L99.5 -4.7 L100.5 -2.1 L101.5 0.5 L102.5 3.1 L103.5 5.7 L104.5 8.3 L105.5 10.9 L106.5 13.5 L107.5 16.1 L108.5 18.7 L109.5 21.3 L110.5 23.9 L111.5 26.4 L112.5 29.0 L113.5 31.6 L114.5 34.2 L115.5 36.8 L116.5 39.4 L117.5 42.0 L118.5 44.6 L119.5 47.2 L120.5 49.8 L121.5 52.4 L122.5 55.0 L123.5 57.6 L124.5 60.2 L125.5 62.8 L126.5 65.4 L127.5 68.0 L128.5 70.5 L129.5 73.1 L130.0 74.4 M80.0 -8.9 L81.0 -6.3 L82.0 -3.7 L83.0 -1.1 L84.0 1.5 L85.0 4.1 L86.0 6.7 L87.0 9.3 L88.0 11.9 L89.0 14.5 L90.0 17.1 L91.0 19.7 L92.0 22.3 L93.0 24.9 L94.0 27.5 L95.0 30.1 L96.0 32.7 L97.0 35.3 L98.0 37.9 L99.0 40.5 L100.0 43.1 L101.0 45.7 L102.0 48.2 L103.0 50.8 L104.0 53.4 L105.0 56.0 L106.0 58.6 L107.0 61.2 L108.0 63.8 L109.0 66.4 L110.0 69.0 L111.0 71.6 L112.0 74.2 L112.0 74.2 M61.0 -10.0 L62.0 -7.4 L63.0 -4.8 L64.0 -2.2 L65.0 0.4 L66.0 3.0 L67.0 5.6 L68.0 8.2 L69.0 10.8 L70.0 13.4 L71.0 16.0 L72.0 18.6 L73.0 21.2 L74.0 23.8 L75.0 26.4 L76.0 29.0 L77.0 31.6 L78.0 34.2 L79.0 36.8 L80.0 39.4 L81.0 42.0 L82.0 44.6 L83.0 47.2 L84.0 49.8 L85.0 52.4 L86.0 55.0 L87.0 57.6 L88.0 60.2 L89.0 62.8 L90.0 65.4 L91.0 68.0 L92.0 70.6 L93.0 73.2 L93.5 74.5 M42.0 -9.2 L43.0 -6.6 L44.0 -4.0 L45.0 -1.4 L46.0 1.2 L47.0 3.8 L48.0 6.4 L49.0 9.0 L50.0 11.6 L51.0 14.2 L52.0 16.8 L53.0 19.4 L54.0 22.0 L55.0 24.6 L56.0 27.2 L57.0 29.8 L58.0 32.4 L59.0 35.0 L60.0 37.6 L61.0 40.2 L62.0 42.8 L63.0 45.3 L64.0 47.9 L65.0 50.5 L66.0 53.1 L67.0 55.7 L68.0 58.3 L69.0 60.9 L70.0 63.5 L71.0 66.1 L72.0 68.7 L73.0 71.3 L74.0 73.9 L74.0 73.9 M22.0 -9.3 L23.0 -6.7 L24.0 -4.1 L25.0 -1.5 L26.0 1.1 L27.0 3.7 L28.0 6.3 L29.0 8.9 L30.0 11.5 L31.0 14.1 L32.0 16.7 L33.0 19.3 L34.0 21.9 L35.0 24.5 L36.0 27.1 L37.0 29.7 L38.0 32.3 L39.0 34.9 L40.0 37.5 L41.0 40.1 L42.0 42.7 L43.0 45.3 L44.0 47.9 L45.0 50.5 L46.0 53.1 L47.0 55.7 L48.0 58.3 L49.0 60.9 L50.0 63.5 L51.0 66.1 L52.0 68.7 L53.0 71.3 L54.0 73.9 L54.0 73.9 M1.5 -8.8 L2.5 -6.2 L3.5 -3.6 L4.5 -1.0 L5.5 1.6 L6.5 4.2 L7.5 6.8 L8.5 9.4 L9.5 12.0 L10.5 14.6 L11.5 17.2 L12.5 19.8 L13.5 22.4 L14.5 25.0 L15.5 27.6 L16.5 30.2 L17.5 32.8 L18.5 35.4 L19.5 38.0 L20.5 40.6 L21.5 43.2 L22.5 45.8 L23.5 48.4 L24.5 51.0 L25.5 53.6 L26.5 56.2 L27.5 58.8 L28.5 61.4 L29.5 64.0 L30.5 66.6 L31.5 69.2 L32.5 71.8 L33.5 74.4 L33.5 74.4 M-9.5 18.2 L-8.5 20.8 L-7.5 23.4 L-6.5 26.0 L-5.5 28.6 L-4.5 31.1 L-3.5 33.7 L-2.5 36.3 L-1.5 38.9 L-0.5 41.5 L0.5 44.1 L1.5 46.7 L2.5 49.3 L3.5 51.9 L4.5 54.5 L5.5 57.1 L6.5 59.7 L7.5 62.3 L8.5 64.9 L9.5 67.5 L10.5 70.1 L11.5 72.7 L12.0 74.0" fill="none" stroke="rgba(255,255,255,0.35)" stroke-width="0.8"/></svg>
</div>
<div class="a" style="left:412px;top:159px;font-size:18px;line-height:22px;color:#fff;letter-spacing:0.3px">【有奖调研】阿里云短信服务易用性有奖调研</div>
<!-- status -->
<div class="a" style="left:192px;top:219px;font-size:12px;color:#666">用户状态/类型：</div>
<div class="a" style="left:281px;top:215px;font-size:16px;line-height:20px;color:#555;font-weight:bold">正常 / 企业用户</div>
<!-- buttons -->
<div class="a" style="left:652px;top:212px;width:316px;height:31px;background:#f4f4f4;border:1px solid #dcdcdc"></div>
<div class="a" style="left:733px;top:212px;width:1px;height:31px;background:#dcdcdc"></div>
<div class="a" style="left:877px;top:212px;width:1px;height:31px;background:#dcdcdc"></div>
<div class="a" style="left:970px;top:212px;width:94px;height:31px;background:#f4f4f4;border:1px solid #dcdcdc"></div>
<div class="a" style="left:669px;top:220px;color:#555">新手引导</div>
<div class="a" style="left:750px;top:220px;color:#555">OpenAPI 开发者门户</div>
<div class="a" style="left:894px;top:220px;color:#555">开发者指南</div>
<div class="a" style="left:987px;top:220px;color:#666">AccessKey</div>
<div class="a" style="left:965px;top:197px;width:107px;height:51px;border:3px solid #f0302f"></div>
<!-- left panel -->
<div class="panel" style="left:192px;top:255px;width:583px;height:500px">
  <div class="phd"></div>
</div>
<div class="a" style="left:207px;top:267px;color:#333">发送量数据</div>
<div class="a" style="left:635px;top:267px;color:#333">数据获取时间 16:47:30</div>
<div class="a" style="left:217px;top:310px;width:166px;height:32px;border:1px solid #e4e4e4;background:#fff"></div>
<div class="a" style="left:272px;top:310px;width:56px;height:32px;background:#00c1de"></div>
<div class="a" style="left:233px;top:317px;color:#555">上月</div>
<div class="a" style="left:288px;top:317px;color:#fff">本月</div>
<div class="a" style="left:337px;top:317px;color:#555">自定义</div>
<div class="a" style="left:213px;top:365px;width:6px;height:6px;border-radius:3px;background:#2fcfee"></div>
<div class="a" style="left:224px;top:359px;color:#666">发送总量(条)</div>
<div class="a" style="left:396px;top:365px;width:6px;height:6px;border-radius:3px;background:#3ab54a"></div>
<div class="a" style="left:407px;top:359px;color:#666">发送成功量(条)</div>
<div class="a" style="left:579px;top:365px;width:6px;height:6px;border-radius:3px;background:#f5a623"></div>
<div class="a" style="left:590px;top:359px;color:#666">发送未成功(条)</div>
<div class="a" style="left:223px;top:383px;font-family:'Liberation Serif',serif;font-size:31px;line-height:34px;color:#00c1de">0</div>
<div class="a" style="left:406px;top:383px;font-family:'Liberation Serif',serif;font-size:31px;line-height:34px;color:#00c1de">0</div>
<div class="a" style="left:589px;top:383px;font-family:'Liberation Serif',serif;font-size:31px;line-height:34px;color:#00c1de">0</div>
<!-- chart -->
<svg class="a" style="left:200px;top:440px" width="570" height="140" viewBox="0 0 570 140">
  <g stroke="#e6e6e6" stroke-width="1">
    <path d="M50 14.5H517M50 64.5H517"/>
    <path d="M236.5 14V113M423.5 14V113"/>
  </g>
  <path d="M49.5 14V114" stroke="#333" stroke-width="1"/>
  <path d="M50 113.5H517" stroke="#d2ad4e" stroke-width="1.3"/>
  <g font-family="Liberation Sans" fill="#1a1a1a">
    <text x="46" y="18" font-size="11" font-weight="bold" text-anchor="end">1</text>
    <text x="46" y="68" font-size="11" text-anchor="end">0.5</text>
    <text x="46" y="117" font-size="11" text-anchor="end">0</text>
    <text x="17" y="130" font-size="12" font-weight="bold" letter-spacing="0.15">2021-08-01</text>
    <text x="236.5" y="130" font-size="12" text-anchor="middle" letter-spacing="0.1">2021-08-11</text>
    <text x="423" y="130" font-size="12" text-anchor="middle" letter-spacing="0.1">2021-08-21</text>
    <text x="485" y="130" font-size="12" font-weight="bold" letter-spacing="0.15">2021-08-26</text>
  </g>
</svg>
<!-- right panel 1 -->
<div class="panel" style="left:791px;top:255px;width:287px;height:88px">
  <div class="phd"></div>
</div>
<div class="a" style="left:806px;top:267px;color:#333">用户监控信息</div>
<div class="a" style="left:808px;top:310px;color:#666">暂无预警信息，<span style="color:#00c1de">前往设置</span></div>
<!-- right panel 2 -->
<div class="panel" style="left:791px;top:363px;width:287px;height:323px">
  <div class="phd"></div>
</div>
<div class="a" style="left:806px;top:375px;color:#333">快捷操作入口</div>
<div class="a" style="left:804px;top:421px;color:#666">国内消息</div>
<div class="a" style="left:814px;top:458px;color:#666">已有短信签名<span style="color:#00c1de">1</span>个</div>
<div class="a" style="left:814px;top:482px;color:#666">已有短信模版<span style="color:#00c1de">6</span>个</div>
<div class="a" style="left:814px;top:506px;color:#666">已有群发助手任务<span style="color:#00c1de">0</span>个</div>
<div class="a" style="left:1017px;top:458px;color:#00c1de">添加签名</div>
<div class="a" style="left:1017px;top:482px;color:#00c1de">添加模版</div>
<div class="a" style="left:993px;top:506px;color:#00c1de">提交发送任务</div>
<div class="a" style="left:804px;top:538px;width:261px;height:1px;background:repeating-linear-gradient(to right,#d0d0d0 0 2px,transparent 2px 5px)"></div>
<div class="a" style="left:804px;top:553px;color:#666">国际/港澳台消息</div>
<div class="a" style="left:814px;top:589px;color:#666">已有短信签名<span style="color:#00c1de">1</span>个</div>
<div class="a" style="left:814px;top:613px;color:#666">已有短信模版<span style="color:#00c1de">0</span>个</div>
<div class="a" style="left:814px;top:637px;color:#666">已有群发助手任务<span style="color:#00c1de">0</span>个</div>
<div class="a" style="left:1017px;top:589px;color:#00c1de">添加签名</div>
<div class="a" style="left:1017px;top:613px;color:#00c1de">添加模版</div>
<div class="a" style="left:993px;top:637px;color:#00c1de">提交发送任务</div>
<!-- arrow -->
<svg class="a" style="left:890px;top:250px" width="110" height="115" viewBox="0 0 110 115">
  <path d="M94 10L77.2 17.9L83.2 17.9L7.4 108.4L8.6 109.6L87.7 21.8L88.5 27.8Z" fill="#f53a3a"/>
</svg>
<!-- floating -->
<div class="a" style="left:1046px;top:641px;width:40px;height:40px;border-radius:20px;background:#fff;box-shadow:0 0 6px rgba(0,0,0,.12)"></div>
<svg class="a" style="left:1055px;top:652px" width="21" height="19" viewBox="0 0 21 19">
  <path d="M2.2 1.8H18.6V13.4H6.2L2.2 16.8Z" fill="none" stroke="#606060" stroke-width="1.5" stroke-linejoin="miter"/>
  <path d="M6 8H16.5" stroke="#606060" stroke-width="1.8" stroke-dasharray="2.2 1.4"/>
</svg>
<div class="a" style="left:1046px;top:691px;width:40px;height:40px;border-radius:20px;background:#0a63cc;box-shadow:0 1px 6px rgba(0,0,0,.15)"></div>
<svg class="a" style="left:1056px;top:700px" width="22" height="22" viewBox="0 0 22 22">
  <g fill="none" stroke="#fff" stroke-width="1.1">
    <rect x="2.5" y="3.5" width="6" height="6"/><rect x="2.5" y="12.5" width="6" height="6"/><rect x="11.5" y="12.5" width="6" height="6"/>
  </g>
  <path d="M15.3 1L20.1 5.8L15.3 10.6L10.5 5.8Z" fill="none" stroke="#e6eefa" stroke-width="1"/>
</svg>
<div id="scroll">
  <div style="position:absolute;left:0;top:17px;width:17px;height:550px;background:#cdcdcd"></div>
  <svg style="position:absolute;left:3px;top:3px" width="11" height="10" viewBox="0 0 11 10"><path d="M1.5 7.5L5.5 3L9.5 7.5" fill="none" stroke="#505050" stroke-width="2.2"/></svg>
  <div style="position:absolute;left:17px;top:0;width:3px;height:732px;background:#b8d0ea"></div>
</div>
</body></html>
